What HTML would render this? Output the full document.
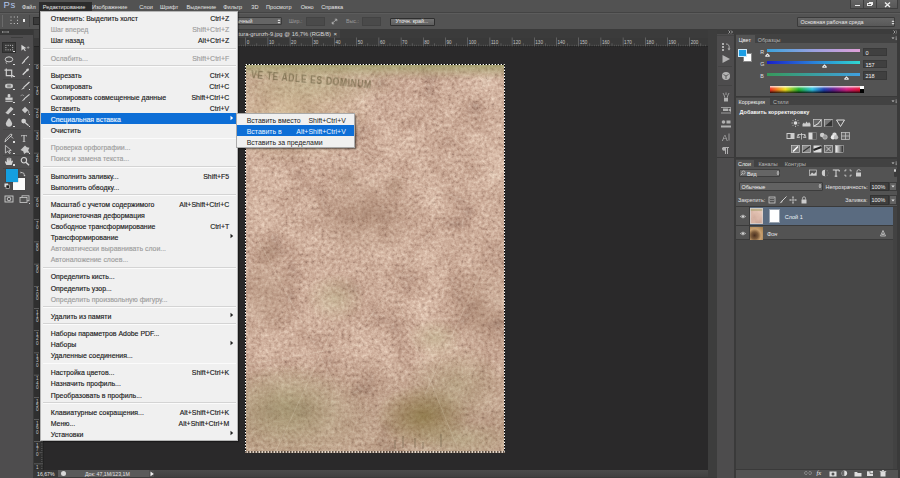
<!DOCTYPE html><html><head><meta charset="utf-8"><style>
*{margin:0;padding:0;box-sizing:border-box}
html,body{width:900px;height:478px;overflow:hidden;background:#535353;font-family:'Liberation Sans', sans-serif;position:relative}
.a{position:absolute}
.t{position:absolute;white-space:nowrap;line-height:1}
svg{position:absolute;overflow:visible}
</style></head><body>

<div class="a" style="left:34px;top:29px;width:674px;height:449px;background:#2a292a;"></div>
<div class="a" style="left:34px;top:29px;width:674px;height:8.5px;background:#3b3b3b;"></div>
<div class="a" style="left:34px;top:29px;width:306px;height:8.5px;background:#434343;"></div>
<div class="t" style="left:40px;top:32px;font-size:5.8px;color:#d8d8d8;left:auto;right:569px">Безымянный-1 @ tekstura-grunzh-9.jpg @ 16,7% (RGB/8)</div>
<div class="t" style="left:333.5px;top:31px;font-size:6px;color:#dddddd;">×</div>
<div class="a" style="left:34px;top:37.5px;width:674px;height:9px;background:#393939;"></div>
<div class="a" style="left:34px;top:46.3px;width:674px;height:0.7px;background:#232323;"></div>
<svg style="left:0px;top:0px;" width="900" height="478" viewBox="0 0 900 478"><rect x="45.60" y="37.5" width="0.6" height="9" fill="#7a7a7a"/><rect x="47.82" y="44.8" width="0.6" height="1.5" fill="#666"/><rect x="50.04" y="44.8" width="0.6" height="1.5" fill="#666"/><rect x="52.26" y="44.8" width="0.6" height="1.5" fill="#666"/><rect x="54.48" y="44.8" width="0.6" height="1.5" fill="#666"/><rect x="56.70" y="43.3" width="0.6" height="3" fill="#707070"/><rect x="58.92" y="44.8" width="0.6" height="1.5" fill="#666"/><rect x="61.14" y="44.8" width="0.6" height="1.5" fill="#666"/><rect x="63.36" y="44.8" width="0.6" height="1.5" fill="#666"/><rect x="65.58" y="44.8" width="0.6" height="1.5" fill="#666"/><rect x="67.80" y="37.5" width="0.6" height="9" fill="#7a7a7a"/><rect x="70.02" y="44.8" width="0.6" height="1.5" fill="#666"/><rect x="72.24" y="44.8" width="0.6" height="1.5" fill="#666"/><rect x="74.46" y="44.8" width="0.6" height="1.5" fill="#666"/><rect x="76.68" y="44.8" width="0.6" height="1.5" fill="#666"/><rect x="78.90" y="43.3" width="0.6" height="3" fill="#707070"/><rect x="81.12" y="44.8" width="0.6" height="1.5" fill="#666"/><rect x="83.34" y="44.8" width="0.6" height="1.5" fill="#666"/><rect x="85.56" y="44.8" width="0.6" height="1.5" fill="#666"/><rect x="87.78" y="44.8" width="0.6" height="1.5" fill="#666"/><rect x="90.00" y="37.5" width="0.6" height="9" fill="#7a7a7a"/><rect x="92.22" y="44.8" width="0.6" height="1.5" fill="#666"/><rect x="94.44" y="44.8" width="0.6" height="1.5" fill="#666"/><rect x="96.66" y="44.8" width="0.6" height="1.5" fill="#666"/><rect x="98.88" y="44.8" width="0.6" height="1.5" fill="#666"/><rect x="101.10" y="43.3" width="0.6" height="3" fill="#707070"/><rect x="103.32" y="44.8" width="0.6" height="1.5" fill="#666"/><rect x="105.54" y="44.8" width="0.6" height="1.5" fill="#666"/><rect x="107.76" y="44.8" width="0.6" height="1.5" fill="#666"/><rect x="109.98" y="44.8" width="0.6" height="1.5" fill="#666"/><rect x="112.20" y="37.5" width="0.6" height="9" fill="#7a7a7a"/><rect x="114.42" y="44.8" width="0.6" height="1.5" fill="#666"/><rect x="116.64" y="44.8" width="0.6" height="1.5" fill="#666"/><rect x="118.86" y="44.8" width="0.6" height="1.5" fill="#666"/><rect x="121.08" y="44.8" width="0.6" height="1.5" fill="#666"/><rect x="123.30" y="43.3" width="0.6" height="3" fill="#707070"/><rect x="125.52" y="44.8" width="0.6" height="1.5" fill="#666"/><rect x="127.74" y="44.8" width="0.6" height="1.5" fill="#666"/><rect x="129.96" y="44.8" width="0.6" height="1.5" fill="#666"/><rect x="132.18" y="44.8" width="0.6" height="1.5" fill="#666"/><rect x="134.40" y="37.5" width="0.6" height="9" fill="#7a7a7a"/><rect x="136.62" y="44.8" width="0.6" height="1.5" fill="#666"/><rect x="138.84" y="44.8" width="0.6" height="1.5" fill="#666"/><rect x="141.06" y="44.8" width="0.6" height="1.5" fill="#666"/><rect x="143.28" y="44.8" width="0.6" height="1.5" fill="#666"/><rect x="145.50" y="43.3" width="0.6" height="3" fill="#707070"/><rect x="147.72" y="44.8" width="0.6" height="1.5" fill="#666"/><rect x="149.94" y="44.8" width="0.6" height="1.5" fill="#666"/><rect x="152.16" y="44.8" width="0.6" height="1.5" fill="#666"/><rect x="154.38" y="44.8" width="0.6" height="1.5" fill="#666"/><rect x="156.60" y="37.5" width="0.6" height="9" fill="#7a7a7a"/><rect x="158.82" y="44.8" width="0.6" height="1.5" fill="#666"/><rect x="161.04" y="44.8" width="0.6" height="1.5" fill="#666"/><rect x="163.26" y="44.8" width="0.6" height="1.5" fill="#666"/><rect x="165.48" y="44.8" width="0.6" height="1.5" fill="#666"/><rect x="167.70" y="43.3" width="0.6" height="3" fill="#707070"/><rect x="169.92" y="44.8" width="0.6" height="1.5" fill="#666"/><rect x="172.14" y="44.8" width="0.6" height="1.5" fill="#666"/><rect x="174.36" y="44.8" width="0.6" height="1.5" fill="#666"/><rect x="176.58" y="44.8" width="0.6" height="1.5" fill="#666"/><rect x="178.80" y="37.5" width="0.6" height="9" fill="#7a7a7a"/><rect x="181.02" y="44.8" width="0.6" height="1.5" fill="#666"/><rect x="183.24" y="44.8" width="0.6" height="1.5" fill="#666"/><rect x="185.46" y="44.8" width="0.6" height="1.5" fill="#666"/><rect x="187.68" y="44.8" width="0.6" height="1.5" fill="#666"/><rect x="189.90" y="43.3" width="0.6" height="3" fill="#707070"/><rect x="192.12" y="44.8" width="0.6" height="1.5" fill="#666"/><rect x="194.34" y="44.8" width="0.6" height="1.5" fill="#666"/><rect x="196.56" y="44.8" width="0.6" height="1.5" fill="#666"/><rect x="198.78" y="44.8" width="0.6" height="1.5" fill="#666"/><rect x="201.00" y="37.5" width="0.6" height="9" fill="#7a7a7a"/><rect x="203.22" y="44.8" width="0.6" height="1.5" fill="#666"/><rect x="205.44" y="44.8" width="0.6" height="1.5" fill="#666"/><rect x="207.66" y="44.8" width="0.6" height="1.5" fill="#666"/><rect x="209.88" y="44.8" width="0.6" height="1.5" fill="#666"/><rect x="212.10" y="43.3" width="0.6" height="3" fill="#707070"/><rect x="214.32" y="44.8" width="0.6" height="1.5" fill="#666"/><rect x="216.54" y="44.8" width="0.6" height="1.5" fill="#666"/><rect x="218.76" y="44.8" width="0.6" height="1.5" fill="#666"/><rect x="220.98" y="44.8" width="0.6" height="1.5" fill="#666"/><rect x="223.20" y="37.5" width="0.6" height="9" fill="#7a7a7a"/><rect x="225.42" y="44.8" width="0.6" height="1.5" fill="#666"/><rect x="227.64" y="44.8" width="0.6" height="1.5" fill="#666"/><rect x="229.86" y="44.8" width="0.6" height="1.5" fill="#666"/><rect x="232.08" y="44.8" width="0.6" height="1.5" fill="#666"/><rect x="234.30" y="43.3" width="0.6" height="3" fill="#707070"/><rect x="236.52" y="44.8" width="0.6" height="1.5" fill="#666"/><rect x="238.74" y="44.8" width="0.6" height="1.5" fill="#666"/><rect x="240.96" y="44.8" width="0.6" height="1.5" fill="#666"/><rect x="243.18" y="44.8" width="0.6" height="1.5" fill="#666"/><rect x="245.40" y="37.5" width="0.6" height="9" fill="#7a7a7a"/><rect x="247.62" y="44.8" width="0.6" height="1.5" fill="#666"/><rect x="249.84" y="44.8" width="0.6" height="1.5" fill="#666"/><rect x="252.06" y="44.8" width="0.6" height="1.5" fill="#666"/><rect x="254.28" y="44.8" width="0.6" height="1.5" fill="#666"/><rect x="256.50" y="43.3" width="0.6" height="3" fill="#707070"/><rect x="258.72" y="44.8" width="0.6" height="1.5" fill="#666"/><rect x="260.94" y="44.8" width="0.6" height="1.5" fill="#666"/><rect x="263.16" y="44.8" width="0.6" height="1.5" fill="#666"/><rect x="265.38" y="44.8" width="0.6" height="1.5" fill="#666"/><rect x="267.60" y="37.5" width="0.6" height="9" fill="#7a7a7a"/><rect x="269.82" y="44.8" width="0.6" height="1.5" fill="#666"/><rect x="272.04" y="44.8" width="0.6" height="1.5" fill="#666"/><rect x="274.26" y="44.8" width="0.6" height="1.5" fill="#666"/><rect x="276.48" y="44.8" width="0.6" height="1.5" fill="#666"/><rect x="278.70" y="43.3" width="0.6" height="3" fill="#707070"/><rect x="280.92" y="44.8" width="0.6" height="1.5" fill="#666"/><rect x="283.14" y="44.8" width="0.6" height="1.5" fill="#666"/><rect x="285.36" y="44.8" width="0.6" height="1.5" fill="#666"/><rect x="287.58" y="44.8" width="0.6" height="1.5" fill="#666"/><rect x="289.80" y="37.5" width="0.6" height="9" fill="#7a7a7a"/><rect x="292.02" y="44.8" width="0.6" height="1.5" fill="#666"/><rect x="294.24" y="44.8" width="0.6" height="1.5" fill="#666"/><rect x="296.46" y="44.8" width="0.6" height="1.5" fill="#666"/><rect x="298.68" y="44.8" width="0.6" height="1.5" fill="#666"/><rect x="300.90" y="43.3" width="0.6" height="3" fill="#707070"/><rect x="303.12" y="44.8" width="0.6" height="1.5" fill="#666"/><rect x="305.34" y="44.8" width="0.6" height="1.5" fill="#666"/><rect x="307.56" y="44.8" width="0.6" height="1.5" fill="#666"/><rect x="309.78" y="44.8" width="0.6" height="1.5" fill="#666"/><rect x="312.00" y="37.5" width="0.6" height="9" fill="#7a7a7a"/><rect x="314.22" y="44.8" width="0.6" height="1.5" fill="#666"/><rect x="316.44" y="44.8" width="0.6" height="1.5" fill="#666"/><rect x="318.66" y="44.8" width="0.6" height="1.5" fill="#666"/><rect x="320.88" y="44.8" width="0.6" height="1.5" fill="#666"/><rect x="323.10" y="43.3" width="0.6" height="3" fill="#707070"/><rect x="325.32" y="44.8" width="0.6" height="1.5" fill="#666"/><rect x="327.54" y="44.8" width="0.6" height="1.5" fill="#666"/><rect x="329.76" y="44.8" width="0.6" height="1.5" fill="#666"/><rect x="331.98" y="44.8" width="0.6" height="1.5" fill="#666"/><rect x="334.20" y="37.5" width="0.6" height="9" fill="#7a7a7a"/><rect x="336.42" y="44.8" width="0.6" height="1.5" fill="#666"/><rect x="338.64" y="44.8" width="0.6" height="1.5" fill="#666"/><rect x="340.86" y="44.8" width="0.6" height="1.5" fill="#666"/><rect x="343.08" y="44.8" width="0.6" height="1.5" fill="#666"/><rect x="345.30" y="43.3" width="0.6" height="3" fill="#707070"/><rect x="347.52" y="44.8" width="0.6" height="1.5" fill="#666"/><rect x="349.74" y="44.8" width="0.6" height="1.5" fill="#666"/><rect x="351.96" y="44.8" width="0.6" height="1.5" fill="#666"/><rect x="354.18" y="44.8" width="0.6" height="1.5" fill="#666"/><rect x="356.40" y="37.5" width="0.6" height="9" fill="#7a7a7a"/><rect x="358.62" y="44.8" width="0.6" height="1.5" fill="#666"/><rect x="360.84" y="44.8" width="0.6" height="1.5" fill="#666"/><rect x="363.06" y="44.8" width="0.6" height="1.5" fill="#666"/><rect x="365.28" y="44.8" width="0.6" height="1.5" fill="#666"/><rect x="367.50" y="43.3" width="0.6" height="3" fill="#707070"/><rect x="369.72" y="44.8" width="0.6" height="1.5" fill="#666"/><rect x="371.94" y="44.8" width="0.6" height="1.5" fill="#666"/><rect x="374.16" y="44.8" width="0.6" height="1.5" fill="#666"/><rect x="376.38" y="44.8" width="0.6" height="1.5" fill="#666"/><rect x="378.60" y="37.5" width="0.6" height="9" fill="#7a7a7a"/><rect x="380.82" y="44.8" width="0.6" height="1.5" fill="#666"/><rect x="383.04" y="44.8" width="0.6" height="1.5" fill="#666"/><rect x="385.26" y="44.8" width="0.6" height="1.5" fill="#666"/><rect x="387.48" y="44.8" width="0.6" height="1.5" fill="#666"/><rect x="389.70" y="43.3" width="0.6" height="3" fill="#707070"/><rect x="391.92" y="44.8" width="0.6" height="1.5" fill="#666"/><rect x="394.14" y="44.8" width="0.6" height="1.5" fill="#666"/><rect x="396.36" y="44.8" width="0.6" height="1.5" fill="#666"/><rect x="398.58" y="44.8" width="0.6" height="1.5" fill="#666"/><rect x="400.80" y="37.5" width="0.6" height="9" fill="#7a7a7a"/><rect x="403.02" y="44.8" width="0.6" height="1.5" fill="#666"/><rect x="405.24" y="44.8" width="0.6" height="1.5" fill="#666"/><rect x="407.46" y="44.8" width="0.6" height="1.5" fill="#666"/><rect x="409.68" y="44.8" width="0.6" height="1.5" fill="#666"/><rect x="411.90" y="43.3" width="0.6" height="3" fill="#707070"/><rect x="414.12" y="44.8" width="0.6" height="1.5" fill="#666"/><rect x="416.34" y="44.8" width="0.6" height="1.5" fill="#666"/><rect x="418.56" y="44.8" width="0.6" height="1.5" fill="#666"/><rect x="420.78" y="44.8" width="0.6" height="1.5" fill="#666"/><rect x="423.00" y="37.5" width="0.6" height="9" fill="#7a7a7a"/><rect x="425.22" y="44.8" width="0.6" height="1.5" fill="#666"/><rect x="427.44" y="44.8" width="0.6" height="1.5" fill="#666"/><rect x="429.66" y="44.8" width="0.6" height="1.5" fill="#666"/><rect x="431.88" y="44.8" width="0.6" height="1.5" fill="#666"/><rect x="434.10" y="43.3" width="0.6" height="3" fill="#707070"/><rect x="436.32" y="44.8" width="0.6" height="1.5" fill="#666"/><rect x="438.54" y="44.8" width="0.6" height="1.5" fill="#666"/><rect x="440.76" y="44.8" width="0.6" height="1.5" fill="#666"/><rect x="442.98" y="44.8" width="0.6" height="1.5" fill="#666"/><rect x="445.20" y="37.5" width="0.6" height="9" fill="#7a7a7a"/><rect x="447.42" y="44.8" width="0.6" height="1.5" fill="#666"/><rect x="449.64" y="44.8" width="0.6" height="1.5" fill="#666"/><rect x="451.86" y="44.8" width="0.6" height="1.5" fill="#666"/><rect x="454.08" y="44.8" width="0.6" height="1.5" fill="#666"/><rect x="456.30" y="43.3" width="0.6" height="3" fill="#707070"/><rect x="458.52" y="44.8" width="0.6" height="1.5" fill="#666"/><rect x="460.74" y="44.8" width="0.6" height="1.5" fill="#666"/><rect x="462.96" y="44.8" width="0.6" height="1.5" fill="#666"/><rect x="465.18" y="44.8" width="0.6" height="1.5" fill="#666"/><rect x="467.40" y="37.5" width="0.6" height="9" fill="#7a7a7a"/><rect x="469.62" y="44.8" width="0.6" height="1.5" fill="#666"/><rect x="471.84" y="44.8" width="0.6" height="1.5" fill="#666"/><rect x="474.06" y="44.8" width="0.6" height="1.5" fill="#666"/><rect x="476.28" y="44.8" width="0.6" height="1.5" fill="#666"/><rect x="478.50" y="43.3" width="0.6" height="3" fill="#707070"/><rect x="480.72" y="44.8" width="0.6" height="1.5" fill="#666"/><rect x="482.94" y="44.8" width="0.6" height="1.5" fill="#666"/><rect x="485.16" y="44.8" width="0.6" height="1.5" fill="#666"/><rect x="487.38" y="44.8" width="0.6" height="1.5" fill="#666"/><rect x="489.60" y="37.5" width="0.6" height="9" fill="#7a7a7a"/><rect x="491.82" y="44.8" width="0.6" height="1.5" fill="#666"/><rect x="494.04" y="44.8" width="0.6" height="1.5" fill="#666"/><rect x="496.26" y="44.8" width="0.6" height="1.5" fill="#666"/><rect x="498.48" y="44.8" width="0.6" height="1.5" fill="#666"/><rect x="500.70" y="43.3" width="0.6" height="3" fill="#707070"/><rect x="502.92" y="44.8" width="0.6" height="1.5" fill="#666"/><rect x="505.14" y="44.8" width="0.6" height="1.5" fill="#666"/><rect x="507.36" y="44.8" width="0.6" height="1.5" fill="#666"/><rect x="509.58" y="44.8" width="0.6" height="1.5" fill="#666"/><rect x="511.80" y="37.5" width="0.6" height="9" fill="#7a7a7a"/><rect x="514.02" y="44.8" width="0.6" height="1.5" fill="#666"/><rect x="516.24" y="44.8" width="0.6" height="1.5" fill="#666"/><rect x="518.46" y="44.8" width="0.6" height="1.5" fill="#666"/><rect x="520.68" y="44.8" width="0.6" height="1.5" fill="#666"/><rect x="522.90" y="43.3" width="0.6" height="3" fill="#707070"/><rect x="525.12" y="44.8" width="0.6" height="1.5" fill="#666"/><rect x="527.34" y="44.8" width="0.6" height="1.5" fill="#666"/><rect x="529.56" y="44.8" width="0.6" height="1.5" fill="#666"/><rect x="531.78" y="44.8" width="0.6" height="1.5" fill="#666"/><rect x="534.00" y="37.5" width="0.6" height="9" fill="#7a7a7a"/><rect x="536.22" y="44.8" width="0.6" height="1.5" fill="#666"/><rect x="538.44" y="44.8" width="0.6" height="1.5" fill="#666"/><rect x="540.66" y="44.8" width="0.6" height="1.5" fill="#666"/><rect x="542.88" y="44.8" width="0.6" height="1.5" fill="#666"/><rect x="545.10" y="43.3" width="0.6" height="3" fill="#707070"/><rect x="547.32" y="44.8" width="0.6" height="1.5" fill="#666"/><rect x="549.54" y="44.8" width="0.6" height="1.5" fill="#666"/><rect x="551.76" y="44.8" width="0.6" height="1.5" fill="#666"/><rect x="553.98" y="44.8" width="0.6" height="1.5" fill="#666"/><rect x="556.20" y="37.5" width="0.6" height="9" fill="#7a7a7a"/><rect x="558.42" y="44.8" width="0.6" height="1.5" fill="#666"/><rect x="560.64" y="44.8" width="0.6" height="1.5" fill="#666"/><rect x="562.86" y="44.8" width="0.6" height="1.5" fill="#666"/><rect x="565.08" y="44.8" width="0.6" height="1.5" fill="#666"/><rect x="567.30" y="43.3" width="0.6" height="3" fill="#707070"/><rect x="569.52" y="44.8" width="0.6" height="1.5" fill="#666"/><rect x="571.74" y="44.8" width="0.6" height="1.5" fill="#666"/><rect x="573.96" y="44.8" width="0.6" height="1.5" fill="#666"/><rect x="576.18" y="44.8" width="0.6" height="1.5" fill="#666"/><rect x="578.40" y="37.5" width="0.6" height="9" fill="#7a7a7a"/><rect x="580.62" y="44.8" width="0.6" height="1.5" fill="#666"/><rect x="582.84" y="44.8" width="0.6" height="1.5" fill="#666"/><rect x="585.06" y="44.8" width="0.6" height="1.5" fill="#666"/><rect x="587.28" y="44.8" width="0.6" height="1.5" fill="#666"/><rect x="589.50" y="43.3" width="0.6" height="3" fill="#707070"/><rect x="591.72" y="44.8" width="0.6" height="1.5" fill="#666"/><rect x="593.94" y="44.8" width="0.6" height="1.5" fill="#666"/><rect x="596.16" y="44.8" width="0.6" height="1.5" fill="#666"/><rect x="598.38" y="44.8" width="0.6" height="1.5" fill="#666"/><rect x="600.60" y="37.5" width="0.6" height="9" fill="#7a7a7a"/><rect x="602.82" y="44.8" width="0.6" height="1.5" fill="#666"/><rect x="605.04" y="44.8" width="0.6" height="1.5" fill="#666"/><rect x="607.26" y="44.8" width="0.6" height="1.5" fill="#666"/><rect x="609.48" y="44.8" width="0.6" height="1.5" fill="#666"/><rect x="611.70" y="43.3" width="0.6" height="3" fill="#707070"/><rect x="613.92" y="44.8" width="0.6" height="1.5" fill="#666"/><rect x="616.14" y="44.8" width="0.6" height="1.5" fill="#666"/><rect x="618.36" y="44.8" width="0.6" height="1.5" fill="#666"/><rect x="620.58" y="44.8" width="0.6" height="1.5" fill="#666"/><rect x="622.80" y="37.5" width="0.6" height="9" fill="#7a7a7a"/><rect x="625.02" y="44.8" width="0.6" height="1.5" fill="#666"/><rect x="627.24" y="44.8" width="0.6" height="1.5" fill="#666"/><rect x="629.46" y="44.8" width="0.6" height="1.5" fill="#666"/><rect x="631.68" y="44.8" width="0.6" height="1.5" fill="#666"/><rect x="633.90" y="43.3" width="0.6" height="3" fill="#707070"/><rect x="636.12" y="44.8" width="0.6" height="1.5" fill="#666"/><rect x="638.34" y="44.8" width="0.6" height="1.5" fill="#666"/><rect x="640.56" y="44.8" width="0.6" height="1.5" fill="#666"/><rect x="642.78" y="44.8" width="0.6" height="1.5" fill="#666"/><rect x="645.00" y="37.5" width="0.6" height="9" fill="#7a7a7a"/><rect x="647.22" y="44.8" width="0.6" height="1.5" fill="#666"/><rect x="649.44" y="44.8" width="0.6" height="1.5" fill="#666"/><rect x="651.66" y="44.8" width="0.6" height="1.5" fill="#666"/><rect x="653.88" y="44.8" width="0.6" height="1.5" fill="#666"/><rect x="656.10" y="43.3" width="0.6" height="3" fill="#707070"/><rect x="658.32" y="44.8" width="0.6" height="1.5" fill="#666"/><rect x="660.54" y="44.8" width="0.6" height="1.5" fill="#666"/><rect x="662.76" y="44.8" width="0.6" height="1.5" fill="#666"/><rect x="664.98" y="44.8" width="0.6" height="1.5" fill="#666"/><rect x="667.20" y="37.5" width="0.6" height="9" fill="#7a7a7a"/><rect x="669.42" y="44.8" width="0.6" height="1.5" fill="#666"/><rect x="671.64" y="44.8" width="0.6" height="1.5" fill="#666"/><rect x="673.86" y="44.8" width="0.6" height="1.5" fill="#666"/><rect x="676.08" y="44.8" width="0.6" height="1.5" fill="#666"/><rect x="678.30" y="43.3" width="0.6" height="3" fill="#707070"/><rect x="680.52" y="44.8" width="0.6" height="1.5" fill="#666"/><rect x="682.74" y="44.8" width="0.6" height="1.5" fill="#666"/><rect x="684.96" y="44.8" width="0.6" height="1.5" fill="#666"/><rect x="687.18" y="44.8" width="0.6" height="1.5" fill="#666"/><rect x="689.40" y="37.5" width="0.6" height="9" fill="#7a7a7a"/><rect x="691.62" y="44.8" width="0.6" height="1.5" fill="#666"/><rect x="693.84" y="44.8" width="0.6" height="1.5" fill="#666"/><rect x="696.06" y="44.8" width="0.6" height="1.5" fill="#666"/><rect x="698.28" y="44.8" width="0.6" height="1.5" fill="#666"/><rect x="700.50" y="43.3" width="0.6" height="3" fill="#707070"/><rect x="702.72" y="44.8" width="0.6" height="1.5" fill="#666"/><rect x="704.94" y="44.8" width="0.6" height="1.5" fill="#666"/></svg>
<div class="t" style="left:46.90000000000002px;top:41px;font-size:4.6px;color:#c4c4c4;">90</div>
<div class="t" style="left:69.10000000000001px;top:41px;font-size:4.6px;color:#c4c4c4;">80</div>
<div class="t" style="left:91.3px;top:41px;font-size:4.6px;color:#c4c4c4;">70</div>
<div class="t" style="left:113.50000000000001px;top:41px;font-size:4.6px;color:#c4c4c4;">60</div>
<div class="t" style="left:135.70000000000002px;top:41px;font-size:4.6px;color:#c4c4c4;">50</div>
<div class="t" style="left:157.90000000000003px;top:41px;font-size:4.6px;color:#c4c4c4;">40</div>
<div class="t" style="left:180.10000000000002px;top:41px;font-size:4.6px;color:#c4c4c4;">30</div>
<div class="t" style="left:202.3px;top:41px;font-size:4.6px;color:#c4c4c4;">20</div>
<div class="t" style="left:224.50000000000003px;top:41px;font-size:4.6px;color:#c4c4c4;">10</div>
<div class="t" style="left:246.70000000000002px;top:41px;font-size:4.6px;color:#c4c4c4;">0</div>
<div class="t" style="left:268.90000000000003px;top:41px;font-size:4.6px;color:#c4c4c4;">10</div>
<div class="t" style="left:291.1px;top:41px;font-size:4.6px;color:#c4c4c4;">20</div>
<div class="t" style="left:313.3px;top:41px;font-size:4.6px;color:#c4c4c4;">30</div>
<div class="t" style="left:335.5px;top:41px;font-size:4.6px;color:#c4c4c4;">40</div>
<div class="t" style="left:357.7px;top:41px;font-size:4.6px;color:#c4c4c4;">50</div>
<div class="t" style="left:379.90000000000003px;top:41px;font-size:4.6px;color:#c4c4c4;">60</div>
<div class="t" style="left:402.1px;top:41px;font-size:4.6px;color:#c4c4c4;">70</div>
<div class="t" style="left:424.3px;top:41px;font-size:4.6px;color:#c4c4c4;">80</div>
<div class="t" style="left:446.5px;top:41px;font-size:4.6px;color:#c4c4c4;">90</div>
<div class="t" style="left:468.7px;top:41px;font-size:4.6px;color:#c4c4c4;">100</div>
<div class="t" style="left:490.90000000000003px;top:41px;font-size:4.6px;color:#c4c4c4;">110</div>
<div class="t" style="left:513.0999999999999px;top:41px;font-size:4.6px;color:#c4c4c4;">120</div>
<div class="t" style="left:535.3px;top:41px;font-size:4.6px;color:#c4c4c4;">130</div>
<div class="t" style="left:557.5px;top:41px;font-size:4.6px;color:#c4c4c4;">140</div>
<div class="t" style="left:579.6999999999999px;top:41px;font-size:4.6px;color:#c4c4c4;">150</div>
<div class="t" style="left:601.9px;top:41px;font-size:4.6px;color:#c4c4c4;">160</div>
<div class="t" style="left:624.0999999999999px;top:41px;font-size:4.6px;color:#c4c4c4;">170</div>
<div class="t" style="left:646.3px;top:41px;font-size:4.6px;color:#c4c4c4;">180</div>
<div class="t" style="left:668.5px;top:41px;font-size:4.6px;color:#c4c4c4;">190</div>
<div class="t" style="left:690.6999999999999px;top:41px;font-size:4.6px;color:#c4c4c4;">200</div>
<div class="a" style="left:34px;top:46.5px;width:9px;height:424px;background:#2f2f2f;"></div>
<div class="a" style="left:42.5px;top:46.5px;width:0.7px;height:424px;background:#232323;"></div>
<svg style="left:0px;top:0px;" width="900" height="478" viewBox="0 0 900 478"><rect x="41" y="48.46" width="1.5" height="0.6" fill="#666"/><rect x="41" y="50.68" width="1.5" height="0.6" fill="#666"/><rect x="39.5" y="52.90" width="3" height="0.6" fill="#707070"/><rect x="41" y="55.12" width="1.5" height="0.6" fill="#666"/><rect x="41" y="57.34" width="1.5" height="0.6" fill="#666"/><rect x="41" y="59.56" width="1.5" height="0.6" fill="#666"/><rect x="41" y="61.78" width="1.5" height="0.6" fill="#666"/><rect x="34" y="64.00" width="9" height="0.6" fill="#7a7a7a"/><rect x="41" y="66.22" width="1.5" height="0.6" fill="#666"/><rect x="41" y="68.44" width="1.5" height="0.6" fill="#666"/><rect x="41" y="70.66" width="1.5" height="0.6" fill="#666"/><rect x="41" y="72.88" width="1.5" height="0.6" fill="#666"/><rect x="39.5" y="75.10" width="3" height="0.6" fill="#707070"/><rect x="41" y="77.32" width="1.5" height="0.6" fill="#666"/><rect x="41" y="79.54" width="1.5" height="0.6" fill="#666"/><rect x="41" y="81.76" width="1.5" height="0.6" fill="#666"/><rect x="41" y="83.98" width="1.5" height="0.6" fill="#666"/><rect x="34" y="86.20" width="9" height="0.6" fill="#7a7a7a"/><rect x="41" y="88.42" width="1.5" height="0.6" fill="#666"/><rect x="41" y="90.64" width="1.5" height="0.6" fill="#666"/><rect x="41" y="92.86" width="1.5" height="0.6" fill="#666"/><rect x="41" y="95.08" width="1.5" height="0.6" fill="#666"/><rect x="39.5" y="97.30" width="3" height="0.6" fill="#707070"/><rect x="41" y="99.52" width="1.5" height="0.6" fill="#666"/><rect x="41" y="101.74" width="1.5" height="0.6" fill="#666"/><rect x="41" y="103.96" width="1.5" height="0.6" fill="#666"/><rect x="41" y="106.18" width="1.5" height="0.6" fill="#666"/><rect x="34" y="108.40" width="9" height="0.6" fill="#7a7a7a"/><rect x="41" y="110.62" width="1.5" height="0.6" fill="#666"/><rect x="41" y="112.84" width="1.5" height="0.6" fill="#666"/><rect x="41" y="115.06" width="1.5" height="0.6" fill="#666"/><rect x="41" y="117.28" width="1.5" height="0.6" fill="#666"/><rect x="39.5" y="119.50" width="3" height="0.6" fill="#707070"/><rect x="41" y="121.72" width="1.5" height="0.6" fill="#666"/><rect x="41" y="123.94" width="1.5" height="0.6" fill="#666"/><rect x="41" y="126.16" width="1.5" height="0.6" fill="#666"/><rect x="41" y="128.38" width="1.5" height="0.6" fill="#666"/><rect x="34" y="130.60" width="9" height="0.6" fill="#7a7a7a"/><rect x="41" y="132.82" width="1.5" height="0.6" fill="#666"/><rect x="41" y="135.04" width="1.5" height="0.6" fill="#666"/><rect x="41" y="137.26" width="1.5" height="0.6" fill="#666"/><rect x="41" y="139.48" width="1.5" height="0.6" fill="#666"/><rect x="39.5" y="141.70" width="3" height="0.6" fill="#707070"/><rect x="41" y="143.92" width="1.5" height="0.6" fill="#666"/><rect x="41" y="146.14" width="1.5" height="0.6" fill="#666"/><rect x="41" y="148.36" width="1.5" height="0.6" fill="#666"/><rect x="41" y="150.58" width="1.5" height="0.6" fill="#666"/><rect x="34" y="152.80" width="9" height="0.6" fill="#7a7a7a"/><rect x="41" y="155.02" width="1.5" height="0.6" fill="#666"/><rect x="41" y="157.24" width="1.5" height="0.6" fill="#666"/><rect x="41" y="159.46" width="1.5" height="0.6" fill="#666"/><rect x="41" y="161.68" width="1.5" height="0.6" fill="#666"/><rect x="39.5" y="163.90" width="3" height="0.6" fill="#707070"/><rect x="41" y="166.12" width="1.5" height="0.6" fill="#666"/><rect x="41" y="168.34" width="1.5" height="0.6" fill="#666"/><rect x="41" y="170.56" width="1.5" height="0.6" fill="#666"/><rect x="41" y="172.78" width="1.5" height="0.6" fill="#666"/><rect x="34" y="175.00" width="9" height="0.6" fill="#7a7a7a"/><rect x="41" y="177.22" width="1.5" height="0.6" fill="#666"/><rect x="41" y="179.44" width="1.5" height="0.6" fill="#666"/><rect x="41" y="181.66" width="1.5" height="0.6" fill="#666"/><rect x="41" y="183.88" width="1.5" height="0.6" fill="#666"/><rect x="39.5" y="186.10" width="3" height="0.6" fill="#707070"/><rect x="41" y="188.32" width="1.5" height="0.6" fill="#666"/><rect x="41" y="190.54" width="1.5" height="0.6" fill="#666"/><rect x="41" y="192.76" width="1.5" height="0.6" fill="#666"/><rect x="41" y="194.98" width="1.5" height="0.6" fill="#666"/><rect x="34" y="197.20" width="9" height="0.6" fill="#7a7a7a"/><rect x="41" y="199.42" width="1.5" height="0.6" fill="#666"/><rect x="41" y="201.64" width="1.5" height="0.6" fill="#666"/><rect x="41" y="203.86" width="1.5" height="0.6" fill="#666"/><rect x="41" y="206.08" width="1.5" height="0.6" fill="#666"/><rect x="39.5" y="208.30" width="3" height="0.6" fill="#707070"/><rect x="41" y="210.52" width="1.5" height="0.6" fill="#666"/><rect x="41" y="212.74" width="1.5" height="0.6" fill="#666"/><rect x="41" y="214.96" width="1.5" height="0.6" fill="#666"/><rect x="41" y="217.18" width="1.5" height="0.6" fill="#666"/><rect x="34" y="219.40" width="9" height="0.6" fill="#7a7a7a"/><rect x="41" y="221.62" width="1.5" height="0.6" fill="#666"/><rect x="41" y="223.84" width="1.5" height="0.6" fill="#666"/><rect x="41" y="226.06" width="1.5" height="0.6" fill="#666"/><rect x="41" y="228.28" width="1.5" height="0.6" fill="#666"/><rect x="39.5" y="230.50" width="3" height="0.6" fill="#707070"/><rect x="41" y="232.72" width="1.5" height="0.6" fill="#666"/><rect x="41" y="234.94" width="1.5" height="0.6" fill="#666"/><rect x="41" y="237.16" width="1.5" height="0.6" fill="#666"/><rect x="41" y="239.38" width="1.5" height="0.6" fill="#666"/><rect x="34" y="241.60" width="9" height="0.6" fill="#7a7a7a"/><rect x="41" y="243.82" width="1.5" height="0.6" fill="#666"/><rect x="41" y="246.04" width="1.5" height="0.6" fill="#666"/><rect x="41" y="248.26" width="1.5" height="0.6" fill="#666"/><rect x="41" y="250.48" width="1.5" height="0.6" fill="#666"/><rect x="39.5" y="252.70" width="3" height="0.6" fill="#707070"/><rect x="41" y="254.92" width="1.5" height="0.6" fill="#666"/><rect x="41" y="257.14" width="1.5" height="0.6" fill="#666"/><rect x="41" y="259.36" width="1.5" height="0.6" fill="#666"/><rect x="41" y="261.58" width="1.5" height="0.6" fill="#666"/><rect x="34" y="263.80" width="9" height="0.6" fill="#7a7a7a"/><rect x="41" y="266.02" width="1.5" height="0.6" fill="#666"/><rect x="41" y="268.24" width="1.5" height="0.6" fill="#666"/><rect x="41" y="270.46" width="1.5" height="0.6" fill="#666"/><rect x="41" y="272.68" width="1.5" height="0.6" fill="#666"/><rect x="39.5" y="274.90" width="3" height="0.6" fill="#707070"/><rect x="41" y="277.12" width="1.5" height="0.6" fill="#666"/><rect x="41" y="279.34" width="1.5" height="0.6" fill="#666"/><rect x="41" y="281.56" width="1.5" height="0.6" fill="#666"/><rect x="41" y="283.78" width="1.5" height="0.6" fill="#666"/><rect x="34" y="286.00" width="9" height="0.6" fill="#7a7a7a"/><rect x="41" y="288.22" width="1.5" height="0.6" fill="#666"/><rect x="41" y="290.44" width="1.5" height="0.6" fill="#666"/><rect x="41" y="292.66" width="1.5" height="0.6" fill="#666"/><rect x="41" y="294.88" width="1.5" height="0.6" fill="#666"/><rect x="39.5" y="297.10" width="3" height="0.6" fill="#707070"/><rect x="41" y="299.32" width="1.5" height="0.6" fill="#666"/><rect x="41" y="301.54" width="1.5" height="0.6" fill="#666"/><rect x="41" y="303.76" width="1.5" height="0.6" fill="#666"/><rect x="41" y="305.98" width="1.5" height="0.6" fill="#666"/><rect x="34" y="308.20" width="9" height="0.6" fill="#7a7a7a"/><rect x="41" y="310.42" width="1.5" height="0.6" fill="#666"/><rect x="41" y="312.64" width="1.5" height="0.6" fill="#666"/><rect x="41" y="314.86" width="1.5" height="0.6" fill="#666"/><rect x="41" y="317.08" width="1.5" height="0.6" fill="#666"/><rect x="39.5" y="319.30" width="3" height="0.6" fill="#707070"/><rect x="41" y="321.52" width="1.5" height="0.6" fill="#666"/><rect x="41" y="323.74" width="1.5" height="0.6" fill="#666"/><rect x="41" y="325.96" width="1.5" height="0.6" fill="#666"/><rect x="41" y="328.18" width="1.5" height="0.6" fill="#666"/><rect x="34" y="330.40" width="9" height="0.6" fill="#7a7a7a"/><rect x="41" y="332.62" width="1.5" height="0.6" fill="#666"/><rect x="41" y="334.84" width="1.5" height="0.6" fill="#666"/><rect x="41" y="337.06" width="1.5" height="0.6" fill="#666"/><rect x="41" y="339.28" width="1.5" height="0.6" fill="#666"/><rect x="39.5" y="341.50" width="3" height="0.6" fill="#707070"/><rect x="41" y="343.72" width="1.5" height="0.6" fill="#666"/><rect x="41" y="345.94" width="1.5" height="0.6" fill="#666"/><rect x="41" y="348.16" width="1.5" height="0.6" fill="#666"/><rect x="41" y="350.38" width="1.5" height="0.6" fill="#666"/><rect x="34" y="352.60" width="9" height="0.6" fill="#7a7a7a"/><rect x="41" y="354.82" width="1.5" height="0.6" fill="#666"/><rect x="41" y="357.04" width="1.5" height="0.6" fill="#666"/><rect x="41" y="359.26" width="1.5" height="0.6" fill="#666"/><rect x="41" y="361.48" width="1.5" height="0.6" fill="#666"/><rect x="39.5" y="363.70" width="3" height="0.6" fill="#707070"/><rect x="41" y="365.92" width="1.5" height="0.6" fill="#666"/><rect x="41" y="368.14" width="1.5" height="0.6" fill="#666"/><rect x="41" y="370.36" width="1.5" height="0.6" fill="#666"/><rect x="41" y="372.58" width="1.5" height="0.6" fill="#666"/><rect x="34" y="374.80" width="9" height="0.6" fill="#7a7a7a"/><rect x="41" y="377.02" width="1.5" height="0.6" fill="#666"/><rect x="41" y="379.24" width="1.5" height="0.6" fill="#666"/><rect x="41" y="381.46" width="1.5" height="0.6" fill="#666"/><rect x="41" y="383.68" width="1.5" height="0.6" fill="#666"/><rect x="39.5" y="385.90" width="3" height="0.6" fill="#707070"/><rect x="41" y="388.12" width="1.5" height="0.6" fill="#666"/><rect x="41" y="390.34" width="1.5" height="0.6" fill="#666"/><rect x="41" y="392.56" width="1.5" height="0.6" fill="#666"/><rect x="41" y="394.78" width="1.5" height="0.6" fill="#666"/><rect x="34" y="397.00" width="9" height="0.6" fill="#7a7a7a"/><rect x="41" y="399.22" width="1.5" height="0.6" fill="#666"/><rect x="41" y="401.44" width="1.5" height="0.6" fill="#666"/><rect x="41" y="403.66" width="1.5" height="0.6" fill="#666"/><rect x="41" y="405.88" width="1.5" height="0.6" fill="#666"/><rect x="39.5" y="408.10" width="3" height="0.6" fill="#707070"/><rect x="41" y="410.32" width="1.5" height="0.6" fill="#666"/><rect x="41" y="412.54" width="1.5" height="0.6" fill="#666"/><rect x="41" y="414.76" width="1.5" height="0.6" fill="#666"/><rect x="41" y="416.98" width="1.5" height="0.6" fill="#666"/><rect x="34" y="419.20" width="9" height="0.6" fill="#7a7a7a"/><rect x="41" y="421.42" width="1.5" height="0.6" fill="#666"/><rect x="41" y="423.64" width="1.5" height="0.6" fill="#666"/><rect x="41" y="425.86" width="1.5" height="0.6" fill="#666"/><rect x="41" y="428.08" width="1.5" height="0.6" fill="#666"/><rect x="39.5" y="430.30" width="3" height="0.6" fill="#707070"/><rect x="41" y="432.52" width="1.5" height="0.6" fill="#666"/><rect x="41" y="434.74" width="1.5" height="0.6" fill="#666"/><rect x="41" y="436.96" width="1.5" height="0.6" fill="#666"/><rect x="41" y="439.18" width="1.5" height="0.6" fill="#666"/><rect x="34" y="441.40" width="9" height="0.6" fill="#7a7a7a"/><rect x="41" y="443.62" width="1.5" height="0.6" fill="#666"/><rect x="41" y="445.84" width="1.5" height="0.6" fill="#666"/><rect x="41" y="448.06" width="1.5" height="0.6" fill="#666"/><rect x="41" y="450.28" width="1.5" height="0.6" fill="#666"/><rect x="39.5" y="452.50" width="3" height="0.6" fill="#707070"/><rect x="41" y="454.72" width="1.5" height="0.6" fill="#666"/><rect x="41" y="456.94" width="1.5" height="0.6" fill="#666"/><rect x="41" y="459.16" width="1.5" height="0.6" fill="#666"/><rect x="41" y="461.38" width="1.5" height="0.6" fill="#666"/><rect x="34" y="463.60" width="9" height="0.6" fill="#7a7a7a"/><rect x="41" y="465.82" width="1.5" height="0.6" fill="#666"/><rect x="41" y="468.04" width="1.5" height="0.6" fill="#666"/></svg>
<div class="t" style="left:35.2px;top:65.80px;font-size:4.6px;line-height:4.4px;color:#c4c4c4;width:4px;text-align:center;white-space:normal;word-break:break-all">0</div>
<div class="t" style="left:35.2px;top:88.05px;font-size:4.6px;line-height:4.4px;color:#c4c4c4;width:4px;text-align:center;white-space:normal;word-break:break-all">1<br>0</div>
<div class="t" style="left:35.2px;top:110.30px;font-size:4.6px;line-height:4.4px;color:#c4c4c4;width:4px;text-align:center;white-space:normal;word-break:break-all">2<br>0</div>
<div class="t" style="left:35.2px;top:132.55px;font-size:4.6px;line-height:4.4px;color:#c4c4c4;width:4px;text-align:center;white-space:normal;word-break:break-all">3<br>0</div>
<div class="t" style="left:35.2px;top:154.80px;font-size:4.6px;line-height:4.4px;color:#c4c4c4;width:4px;text-align:center;white-space:normal;word-break:break-all">4<br>0</div>
<div class="t" style="left:35.2px;top:177.05px;font-size:4.6px;line-height:4.4px;color:#c4c4c4;width:4px;text-align:center;white-space:normal;word-break:break-all">5<br>0</div>
<div class="t" style="left:35.2px;top:199.30px;font-size:4.6px;line-height:4.4px;color:#c4c4c4;width:4px;text-align:center;white-space:normal;word-break:break-all">6<br>0</div>
<div class="t" style="left:35.2px;top:221.55px;font-size:4.6px;line-height:4.4px;color:#c4c4c4;width:4px;text-align:center;white-space:normal;word-break:break-all">7<br>0</div>
<div class="t" style="left:35.2px;top:243.80px;font-size:4.6px;line-height:4.4px;color:#c4c4c4;width:4px;text-align:center;white-space:normal;word-break:break-all">8<br>0</div>
<div class="t" style="left:35.2px;top:266.05px;font-size:4.6px;line-height:4.4px;color:#c4c4c4;width:4px;text-align:center;white-space:normal;word-break:break-all">9<br>0</div>
<div class="t" style="left:35.2px;top:288.30px;font-size:4.6px;line-height:4.4px;color:#c4c4c4;width:4px;text-align:center;white-space:normal;word-break:break-all">1<br>0<br>0</div>
<div class="t" style="left:35.2px;top:310.55px;font-size:4.6px;line-height:4.4px;color:#c4c4c4;width:4px;text-align:center;white-space:normal;word-break:break-all">1<br>1<br>0</div>
<div class="t" style="left:35.2px;top:332.80px;font-size:4.6px;line-height:4.4px;color:#c4c4c4;width:4px;text-align:center;white-space:normal;word-break:break-all">1<br>2<br>0</div>
<div class="t" style="left:35.2px;top:355.05px;font-size:4.6px;line-height:4.4px;color:#c4c4c4;width:4px;text-align:center;white-space:normal;word-break:break-all">1<br>3<br>0</div>
<div class="t" style="left:35.2px;top:377.30px;font-size:4.6px;line-height:4.4px;color:#c4c4c4;width:4px;text-align:center;white-space:normal;word-break:break-all">1<br>4<br>0</div>
<div class="t" style="left:35.2px;top:399.55px;font-size:4.6px;line-height:4.4px;color:#c4c4c4;width:4px;text-align:center;white-space:normal;word-break:break-all">1<br>5<br>0</div>
<div class="t" style="left:35.2px;top:421.80px;font-size:4.6px;line-height:4.4px;color:#c4c4c4;width:4px;text-align:center;white-space:normal;word-break:break-all">1<br>6<br>0</div>
<div class="t" style="left:35.2px;top:444.05px;font-size:4.6px;line-height:4.4px;color:#c4c4c4;width:4px;text-align:center;white-space:normal;word-break:break-all">1<br>7<br>0</div>
<div class="t" style="left:35.2px;top:466.30px;font-size:4.6px;line-height:4.4px;color:#c4c4c4;width:4px;text-align:center;white-space:normal;word-break:break-all">1<br>8<br>0</div>
<div class="a" style="left:708px;top:29px;width:8.5px;height:449px;background:#3d3d3d;"></div>
<svg style="left:245px;top:64px;overflow:hidden" width="260" height="389" viewBox="0 0 260 389">
<defs><filter id="tex" x="0" y="0" width="100%" height="100%" color-interpolation-filters="sRGB"><feTurbulence type="fractalNoise" baseFrequency="0.03" numOctaves="6" seed="7"/><feColorMatrix type="matrix" values="1 0 0 0 0  1 0 0 0 0  1 0 0 0 0  0 0 0 0 1"/><feComponentTransfer><feFuncR type="table" tableValues="0.50 0.59 0.69 0.78 0.83 0.88 0.93 0.96 0.99"/><feFuncG type="table" tableValues="0.37 0.45 0.54 0.63 0.69 0.75 0.81 0.88 0.94"/><feFuncB type="table" tableValues="0.34 0.41 0.49 0.57 0.63 0.69 0.75 0.82 0.89"/></feComponentTransfer></filter><filter id="grain" x="0" y="0" width="100%" height="100%" color-interpolation-filters="sRGB"><feTurbulence type="fractalNoise" baseFrequency="0.3" numOctaves="3" seed="5"/><feColorMatrix type="matrix" values="1 0 0 0 0  1 0 0 0 0  1 0 0 0 0  0 0 0 0 1"/><feComponentTransfer><feFuncR type="table" tableValues="0.35 0.45 0.6 0.72 0.78 0.84 0.9 0.96 1"/><feFuncG type="table" tableValues="0.25 0.34 0.48 0.6 0.67 0.75 0.83 0.9 0.95"/><feFuncB type="table" tableValues="0.2 0.28 0.4 0.51 0.58 0.66 0.74 0.82 0.88"/></feComponentTransfer><feGaussianBlur stdDeviation="0.3"/></filter>
<radialGradient id="g1" cx="0.5" cy="0.5" r="0.5"><stop offset="0" stop-color="#7a6a28" stop-opacity="0.6"/><stop offset="1" stop-color="#7a6a28" stop-opacity="0"/></radialGradient>
<radialGradient id="g2" cx="0.5" cy="0.5" r="0.5"><stop offset="0" stop-color="#a4a874" stop-opacity="0.3"/><stop offset="1" stop-color="#a4a874" stop-opacity="0"/></radialGradient>
<radialGradient id="g3" cx="0.5" cy="0.5" r="0.5"><stop offset="0" stop-color="#8c6a52" stop-opacity="0.3"/><stop offset="1" stop-color="#8c6a52" stop-opacity="0"/></radialGradient>
<linearGradient id="top" x1="0" y1="0" x2="0" y2="1"><stop offset="0" stop-color="#8e9a58" stop-opacity="0.85"/><stop offset="1" stop-color="#a8a070" stop-opacity="0"/></linearGradient>
<radialGradient id="khaki" cx="0.5" cy="0.5" r="0.5"><stop offset="0" stop-color="#c8b888" stop-opacity="0.45"/><stop offset="1" stop-color="#c8b888" stop-opacity="0"/></radialGradient><linearGradient id="bot" x1="0" y1="0" x2="0" y2="1"><stop offset="0" stop-color="#6e5a38" stop-opacity="0"/><stop offset="0.6" stop-color="#6e5a38" stop-opacity="0.18"/><stop offset="1" stop-color="#6e6a38" stop-opacity="0.12"/></linearGradient><filter id="tb"><feGaussianBlur stdDeviation="0.45"/></filter>
</defs>
<rect width="260" height="389" filter="url(#tex)"/>
<rect width="260" height="389" filter="url(#grain)" opacity="0.5"/>
<rect width="260" height="16" fill="url(#top)" opacity="0.8"/><ellipse cx="45" cy="45" rx="85" ry="55" fill="url(#khaki)"/>
<ellipse cx="70" cy="20" rx="90" ry="22" fill="url(#g2)"/>
<ellipse cx="178" cy="352" rx="48" ry="32" fill="url(#g1)"/><ellipse cx="90" cy="234" rx="30" ry="25" fill="url(#g2)"/><ellipse cx="190" cy="274" rx="28" ry="20" fill="url(#g2)"/>
<ellipse cx="210" cy="320" rx="50" ry="40" fill="url(#g2)"/>
<ellipse cx="45" cy="350" rx="85" ry="50" fill="url(#g2)"/><ellipse cx="40" cy="340" rx="60" ry="40" fill="url(#g2)"/><ellipse cx="215" cy="375" rx="50" ry="20" fill="url(#g2)"/><path d="M150 376v9M158 372v12M170 374v10M178 378v7M196 370v13" stroke="#3e3422" stroke-width="1.2" opacity="0.35"/>
<ellipse cx="120" cy="150" rx="60" ry="45" fill="url(#g3)"/><ellipse cx="100" cy="113" rx="14" ry="12" fill="url(#g3)"/><ellipse cx="150" cy="121" rx="12" ry="14" fill="url(#g3)"/><ellipse cx="24" cy="188" rx="18" ry="14" fill="url(#g3)"/><rect y="290" width="260" height="99" fill="url(#bot)"/>
<ellipse cx="20" cy="230" rx="35" ry="45" fill="url(#g3)"/>
<ellipse cx="235" cy="250" rx="40" ry="60" fill="url(#g3)"/>
<path d="M60 80L230 140M150 230L215 390M10 170L90 320M170 40L255 115M90 260L30 389M200 150L120 260M20 90Q80 60 140 100M240 200L180 330M5 300L120 280M130 10L90 90" stroke="#efe4d4" stroke-width="0.5" opacity="0.4" fill="none"/>
<text x="6" y="12" font-size="8.6" font-family="Liberation Sans" font-weight="bold" fill="#5a5030" opacity="0.55" filter="url(#tb)" transform="rotate(5 6 12) scale(1 1.2)" letter-spacing="0.6">VE  TE ADLE  ES DOMINUM</text>
<rect x="0.5" y="0.5" width="259" height="387.5" fill="none" stroke="#fff" stroke-width="1" stroke-dasharray="1.5 1.5"/>
<rect x="0.5" y="0.5" width="259" height="387.5" fill="none" stroke="#000" stroke-width="1" stroke-dasharray="1.5 1.5" stroke-dashoffset="1.5"/>
</svg>
<div class="a" style="left:34px;top:469.5px;width:674px;height:8.5px;background:#444444;background:linear-gradient(#4a4a4a,#3e3e3e)"></div>
<div class="a" style="left:34px;top:469.5px;width:23.5px;height:8px;background:#383838;"></div>
<div class="t" style="left:37px;top:472px;font-size:5.2px;color:#e4e4e4;">16,67%</div>
<div class="a" style="left:57.5px;top:469.8px;width:91.2px;height:7.6px;background:#5a5a5a;"></div>
<div class="a" style="left:60.5px;top:471.2px;width:5px;height:5px;border-radius:50%;background:#d8d8d8"></div>
<div class="t" style="left:85px;top:472px;font-size:5.2px;color:#e2e2e2;">Док: 47,1М/123,1М</div>
<div class="a" style="left:148.7px;top:469.8px;width:5px;height:7.6px;background:#4e4e4e;"></div>
<svg style="left:148.5px;top:470px;" width="6" height="8" viewBox="0 0 6 8"><path d="M1.5 1.5L4.8 3.9L1.5 6.3Z" fill="#f0f0f0"/></svg>
<div class="a" style="left:0px;top:477.3px;width:900px;height:0.7px;background:#3a3a3a;"></div>
<div class="a" style="left:0px;top:0px;width:900px;height:13px;background:#525252;"></div>
<div class="a" style="left:0px;top:12px;width:900px;height:1px;background:#444444;"></div>
<div class="a" style="left:0px;top:13px;width:900px;height:1px;background:#5c5c5c;"></div>
<div class="t" style="left:3.6px;top:0px;font-size:9.5px;color:#b4c8ee;letter-spacing:0.6px">Ps</div>
<div class="a" style="left:39.3px;top:1.5px;width:52.3px;height:10.5px;background:#2c2c2c;"></div>
<div class="t" style="left:22px;top:5px;font-size:5.6px;color:#e4e4e4;">Файл</div>
<div class="t" style="left:42.7px;top:5px;font-size:5.6px;color:#e4e4e4;">Редактирование</div>
<div class="t" style="left:92px;top:5px;font-size:5.6px;color:#e4e4e4;">Изображение</div>
<div class="t" style="left:139.3px;top:5px;font-size:5.6px;color:#e4e4e4;">Слои</div>
<div class="t" style="left:160px;top:5px;font-size:5.6px;color:#e4e4e4;">Шрифт</div>
<div class="t" style="left:186.5px;top:5px;font-size:5.6px;color:#e4e4e4;">Выделение</div>
<div class="t" style="left:223.3px;top:5px;font-size:5.6px;color:#e4e4e4;">Фильтр</div>
<div class="t" style="left:251.3px;top:5px;font-size:5.6px;color:#e4e4e4;">3D</div>
<div class="t" style="left:266px;top:5px;font-size:5.6px;color:#e4e4e4;">Просмотр</div>
<div class="t" style="left:300.7px;top:5px;font-size:5.6px;color:#e4e4e4;">Окно</div>
<div class="t" style="left:321.2px;top:5px;font-size:5.6px;color:#e4e4e4;">Справка</div>
<div class="a" style="left:850.3px;top:0px;width:47.7px;height:8.6px;background:#3e3e3e;"></div>
<div class="a" style="left:850.8px;top:0px;width:12.3px;height:8.1px;background:#5e5e5e;background:linear-gradient(#646464,#575757)"></div>
<div class="a" style="left:864px;top:0px;width:12.3px;height:8.1px;background:#5e5e5e;background:linear-gradient(#646464,#575757)"></div>
<div class="a" style="left:877.2px;top:0px;width:20.3px;height:8.1px;background:#5e5e5e;background:linear-gradient(#646464,#575757)"></div>
<div class="a" style="left:854.8px;top:4.6px;width:5px;height:1.3px;background:#eeeeee;"></div>
<div class="a" style="left:867.3px;top:3px;width:4.5px;height:3.4px;border:1px solid #eee"></div>
<div class="a" style="left:868.8px;top:1.6px;width:4.5px;height:3.4px;border-top:1px solid #eee;border-right:1px solid #eee"></div>
<svg style="left:884px;top:1.6px;" width="7" height="6" viewBox="0 0 7 6"><path d="M1 0.5L6 5M6 0.5L1 5" stroke="#f0f0f0" stroke-width="1.3"/></svg>
<div class="a" style="left:0px;top:13.8px;width:900px;height:15.2px;background:#535353;"></div>
<div class="a" style="left:2px;top:15px;width:1px;height:12px;background:#6a6a6a;"></div>
<svg style="left:10px;top:16px;" width="9" height="8" viewBox="0 0 9 8"><rect x="0.5" y="0.5" width="1" height="1" fill="#cfcfcf"/><rect x="0.5" y="3.8" width="1" height="1" fill="#cfcfcf"/><rect x="0.5" y="7" width="1" height="1" fill="#cfcfcf"/><rect x="3.8" y="0.5" width="1" height="1" fill="#cfcfcf"/><rect x="3.8" y="7" width="1" height="1" fill="#cfcfcf"/><rect x="7" y="0.5" width="1" height="1" fill="#cfcfcf"/><rect x="7" y="3.8" width="1" height="1" fill="#cfcfcf"/><rect x="7" y="7" width="1" height="1" fill="#cfcfcf"/></svg>
<div class="a" style="left:22.5px;top:19.3px;width:2.5px;height:2.5px;background:#e8e8e8;"></div>
<div class="a" style="left:29px;top:15px;width:1px;height:12px;background:#444;"></div>
<div class="a" style="left:32.5px;top:17px;width:7px;height:8px;background:#3a3a3a;border:1px solid #2a2a2a"></div>
<div class="a" style="left:200px;top:17.3px;width:82px;height:8px;background:#656565;border:1px solid #3a3a3a;border-radius:1px"></div>
<div class="t" style="left:229px;top:19px;font-size:5.3px;color:#e6e6e6;">Обычный</div>
<svg style="left:277px;top:18px;" width="4" height="7" viewBox="0 0 4 7"><path d="M0.5 3L2 1.2L3.5 3ZM0.5 4L2 5.8L3.5 4Z" fill="#ddd"/></svg>
<div class="t" style="left:288.7px;top:19px;font-size:5.3px;color:#9c9c9c;">Шир.:</div>
<div class="a" style="left:306px;top:16.5px;width:18.7px;height:9.8px;background:#4a4a4a;border:1px solid #434343"></div>
<svg style="left:331px;top:18px;" width="7" height="7" viewBox="0 0 7 7"><path d="M1 5.5L5.5 1.5M3.8 1.2H5.8V3.2M1.2 3.8V5.8H3.2" stroke="#bdbdbd" stroke-width="0.8" fill="none"/></svg>
<div class="t" style="left:346px;top:19px;font-size:5.3px;color:#9c9c9c;">Выс.:</div>
<div class="a" style="left:362px;top:16.5px;width:18.7px;height:9.8px;background:#4a4a4a;border:1px solid #434343"></div>
<div class="a" style="left:390px;top:17.5px;width:45px;height:8px;background:#6a6a6a;border:1px solid #2f2f2f;border-radius:1px;background:linear-gradient(#727272,#5e5e5e)"></div>
<div class="t" style="left:395.5px;top:19px;font-size:5.3px;color:#f0f0f0;">Уточн. край...</div>
<div class="a" style="left:797.3px;top:16.7px;width:98px;height:10px;background:#5e5e5e;border:1px solid #3a3a3a;border-radius:1px;background:linear-gradient(#666,#585858)"></div>
<div class="t" style="left:800.5px;top:20px;font-size:5.4px;color:#e8e8e8;">Основная рабочая среда</div>
<svg style="left:891px;top:18.5px;" width="4" height="7" viewBox="0 0 4 7"><path d="M0.5 3L2 1.2L3.5 3ZM0.5 4L2 5.8L3.5 4Z" fill="#ddd"/></svg>
<div class="a" style="left:0px;top:28.5px;width:900px;height:0.8px;background:#3b3b3b;"></div>
<div class="a" style="left:0px;top:29px;width:33.5px;height:449px;background:#4e4d4e;"></div>
<div class="a" style="left:0px;top:29px;width:33.5px;height:5.7px;background:#383838;"></div>
<svg style="left:2px;top:30px;" width="8" height="4" viewBox="0 0 8 4"><path d="M1 2h5M0.8 1l-0.6 1 0.6 1M6 1l0.6 1-0.6 1" stroke="#bbb" stroke-width="0.6" fill="none"/></svg>
<div class="a" style="left:33.2px;top:29px;width:1px;height:449px;background:#3a3a3a;"></div>
<div class="a" style="left:11px;top:37.3px;width:12px;height:0.8px;background:#3e3e3e;"></div>
<div class="a" style="left:2.2px;top:42.4px;width:13.6px;height:11px;background:#3a3a3a;border:1px solid #2e2e2e"></div>
<svg style="left:2.8000000000000007px;top:42.5px;" width="12" height="10" viewBox="0 0 12 10"><g transform="translate(6 5) scale(0.9) translate(-6 -5)" opacity="0.95"><rect x="2" y="1.5" width="1.1" height="1.1" fill="#d0d0d0"/><rect x="2" y="4" width="1.1" height="1.1" fill="#d0d0d0"/><rect x="2" y="6.5" width="1.1" height="1.1" fill="#d0d0d0"/><rect x="4.5" y="1.5" width="1.1" height="1.1" fill="#d0d0d0"/><rect x="4.5" y="6.5" width="1.1" height="1.1" fill="#d0d0d0"/><rect x="7" y="1.5" width="1.1" height="1.1" fill="#d0d0d0"/><rect x="7" y="6.5" width="1.1" height="1.1" fill="#d0d0d0"/><rect x="9.5" y="1.5" width="1.1" height="1.1" fill="#d0d0d0"/><rect x="9.5" y="4" width="1.1" height="1.1" fill="#d0d0d0"/><rect x="9.5" y="6.5" width="1.1" height="1.1" fill="#d0d0d0"/></g></svg>
<div class="a" style="left:13.3px;top:51.1px;width:1.3px;height:1.3px;background:#dcdcdc;"></div>
<svg style="left:18.6px;top:42.5px;" width="12" height="10" viewBox="0 0 12 10"><g transform="translate(6 5) scale(0.9) translate(-6 -5)" opacity="0.95"><path d="M2 1.5L2 8L4 6.2L6 8.5L7 8L5.2 5.5L7.6 5.2Z" fill="#ddd"/><path d="M8 4.5h3M9.5 3v3" stroke="#bbb" stroke-width="0.7"/></g></svg>
<svg style="left:2.8000000000000007px;top:55px;" width="12" height="10" viewBox="0 0 12 10"><g transform="translate(6 5) scale(0.9) translate(-6 -5)" opacity="0.95"><ellipse cx="6" cy="4.3" rx="4.2" ry="2.8" stroke="#d8d8d8" stroke-width="1.1" fill="none"/><path d="M3 6.5q-1 2 1 3" stroke="#ccc" stroke-width="0.8" fill="none"/></g></svg>
<div class="a" style="left:13.3px;top:63.6px;width:1.3px;height:1.3px;background:#dcdcdc;"></div>
<svg style="left:18.6px;top:55px;" width="12" height="10" viewBox="0 0 12 10"><g transform="translate(6 5) scale(0.9) translate(-6 -5)" opacity="0.95"><path d="M10 1L5 6" stroke="#ddd" stroke-width="1.2"/><path d="M5 5.5L2.2 8.8L3 9.5L6.2 6.6Z" fill="#ddd"/></g></svg>
<div class="a" style="left:29.1px;top:63.6px;width:1.3px;height:1.3px;background:#dcdcdc;"></div>
<svg style="left:2.8000000000000007px;top:67.4px;" width="12" height="10" viewBox="0 0 12 10"><g transform="translate(6 5) scale(0.9) translate(-6 -5)" opacity="0.95"><path d="M3 1v8h8M1 3h8v8" stroke="#d8d8d8" stroke-width="1.3" fill="none"/></g></svg>
<div class="a" style="left:13.3px;top:76.0px;width:1.3px;height:1.3px;background:#dcdcdc;"></div>
<svg style="left:18.6px;top:67.4px;" width="12" height="10" viewBox="0 0 12 10"><g transform="translate(6 5) scale(0.9) translate(-6 -5)" opacity="0.95"><path d="M10 1.5L3.5 8" stroke="#ddd" stroke-width="1.5"/><circle cx="8.7" cy="2.8" r="1.3" fill="#ddd"/></g></svg>
<div class="a" style="left:29.1px;top:76.0px;width:1.3px;height:1.3px;background:#dcdcdc;"></div>
<svg style="left:2.8000000000000007px;top:80.6px;" width="12" height="10" viewBox="0 0 12 10"><g transform="translate(6 5) scale(0.9) translate(-6 -5)" opacity="0.95"><rect x="1.5" y="2.5" width="9" height="5" rx="2.5" fill="#cfcfcf"/><rect x="4" y="3.5" width="4" height="3" fill="#888"/></g></svg>
<div class="a" style="left:13.3px;top:89.19999999999999px;width:1.3px;height:1.3px;background:#dcdcdc;"></div>
<svg style="left:18.6px;top:80.6px;" width="12" height="10" viewBox="0 0 12 10"><g transform="translate(6 5) scale(0.9) translate(-6 -5)" opacity="0.95"><path d="M11 0.5L4.5 6.5" stroke="#ddd" stroke-width="1.3"/><path d="M4.5 6L1.5 9.5L5.5 7.5Z" fill="#ddd"/></g></svg>
<div class="a" style="left:29.1px;top:89.19999999999999px;width:1.3px;height:1.3px;background:#dcdcdc;"></div>
<svg style="left:2.8000000000000007px;top:93px;" width="12" height="10" viewBox="0 0 12 10"><g transform="translate(6 5) scale(0.9) translate(-6 -5)" opacity="0.95"><rect x="4.5" y="0.5" width="3" height="4" rx="1.2" fill="#d8d8d8"/><rect x="2" y="4.5" width="8" height="2.6" fill="#d8d8d8"/><rect x="2" y="8" width="8" height="1.2" fill="#d8d8d8"/></g></svg>
<div class="a" style="left:13.3px;top:101.6px;width:1.3px;height:1.3px;background:#dcdcdc;"></div>
<svg style="left:18.6px;top:93px;" width="12" height="10" viewBox="0 0 12 10"><g transform="translate(6 5) scale(0.9) translate(-6 -5)" opacity="0.95"><path d="M11 1L5 6" stroke="#ddd" stroke-width="1.2"/><path d="M5 5.5L2 9L5.8 7Z" fill="#ddd"/><path d="M1 2.5q2 -2 4 0" stroke="#bbb" stroke-width="0.7" fill="none"/></g></svg>
<div class="a" style="left:29.1px;top:101.6px;width:1.3px;height:1.3px;background:#dcdcdc;"></div>
<svg style="left:2.8000000000000007px;top:105px;" width="12" height="10" viewBox="0 0 12 10"><g transform="translate(6 5) scale(0.9) translate(-6 -5)" opacity="0.95"><path d="M2 8L8 1.5L11 4L5 10Z" fill="#d0d0d0"/><path d="M2 8L4.5 5.5" stroke="#777" stroke-width="1"/></g></svg>
<div class="a" style="left:13.3px;top:113.6px;width:1.3px;height:1.3px;background:#dcdcdc;"></div>
<svg style="left:18.6px;top:105px;" width="12" height="10" viewBox="0 0 12 10"><g transform="translate(6 5) scale(0.9) translate(-6 -5)" opacity="0.95"><path d="M2.5 5L6 1.5L9.5 5L6 8.5Z" fill="#d0d0d0"/><path d="M9 5q2 2 1.2 4" stroke="#ccc" stroke-width="0.9" fill="none"/></g></svg>
<div class="a" style="left:29.1px;top:113.6px;width:1.3px;height:1.3px;background:#dcdcdc;"></div>
<svg style="left:2.8000000000000007px;top:117px;" width="12" height="10" viewBox="0 0 12 10"><g transform="translate(6 5) scale(0.9) translate(-6 -5)" opacity="0.95"><path d="M6 0.5Q2.5 5 2.5 6.8A3.5 3.5 0 0 0 9.5 6.8Q9.5 5 6 0.5Z" fill="#d0d0d0"/></g></svg>
<div class="a" style="left:13.3px;top:125.6px;width:1.3px;height:1.3px;background:#dcdcdc;"></div>
<svg style="left:18.6px;top:117px;" width="12" height="10" viewBox="0 0 12 10"><g transform="translate(6 5) scale(0.9) translate(-6 -5)" opacity="0.95"><circle cx="4.5" cy="4" r="2.6" fill="#d8d8d8"/><path d="M6 5.5L10 9" stroke="#d8d8d8" stroke-width="1.4"/></g></svg>
<div class="a" style="left:29.1px;top:125.6px;width:1.3px;height:1.3px;background:#dcdcdc;"></div>
<svg style="left:2.8000000000000007px;top:132.7px;" width="12" height="10" viewBox="0 0 12 10"><g transform="translate(6 5) scale(0.9) translate(-6 -5)" opacity="0.95"><path d="M9.5 1.5L3 8L1.5 9.5L2.5 6L8 0.5Z" stroke="#d8d8d8" stroke-width="1" fill="none"/><path d="M8 3L10.5 5.5" stroke="#ddd" stroke-width="1"/></g></svg>
<div class="a" style="left:13.3px;top:141.29999999999998px;width:1.3px;height:1.3px;background:#dcdcdc;"></div>
<svg style="left:18.6px;top:132.7px;" width="12" height="10" viewBox="0 0 12 10"><g transform="translate(6 5) scale(0.9) translate(-6 -5)" opacity="0.95"><text x="1.5" y="9.5" font-family="Liberation Serif" font-size="11" fill="#ddd">T</text></g></svg>
<svg style="left:2.8000000000000007px;top:144.2px;" width="12" height="10" viewBox="0 0 12 10"><g transform="translate(6 5) scale(0.9) translate(-6 -5)" opacity="0.95"><path d="M2 1L2 9.5L4.5 7.5L6.5 10L7.5 9.5L5.8 7L8.5 6.5Z" fill="none" stroke="#ddd" stroke-width="0.9"/></g></svg>
<div class="a" style="left:13.3px;top:152.79999999999998px;width:1.3px;height:1.3px;background:#dcdcdc;"></div>
<svg style="left:18.6px;top:144.2px;" width="12" height="10" viewBox="0 0 12 10"><g transform="translate(6 5) scale(0.9) translate(-6 -5)" opacity="0.95"><path d="M6 1L8 3L11 3.5L9.5 6.5L11 9.5L7.5 9L5 10.5L4 7.5L1 6L3.5 3.5Z" fill="#cdcdcd"/></g></svg>
<div class="a" style="left:29.1px;top:152.79999999999998px;width:1.3px;height:1.3px;background:#dcdcdc;"></div>
<svg style="left:2.8000000000000007px;top:155.7px;" width="12" height="10" viewBox="0 0 12 10"><g transform="translate(6 5) scale(0.9) translate(-6 -5)" opacity="0.95"><path d="M3 9.5L1.5 6L2 5L3.5 6.5L3.5 2L4.5 1.5L5 5L5.5 1L6.5 1L7 5L7.5 1.5L8.5 2L8.5 5.5L9.5 4.5L10.5 5L9 9.5Z" fill="#d8d8d8"/></g></svg>
<div class="a" style="left:13.3px;top:164.29999999999998px;width:1.3px;height:1.3px;background:#dcdcdc;"></div>
<svg style="left:18.6px;top:155.7px;" width="12" height="10" viewBox="0 0 12 10"><g transform="translate(6 5) scale(0.9) translate(-6 -5)" opacity="0.95"><circle cx="4.8" cy="4.2" r="3" stroke="#ddd" stroke-width="1.2" fill="none"/><path d="M7 6.5L10.5 9.8" stroke="#ddd" stroke-width="1.6"/></g></svg>
<div class="a" style="left:3px;top:129px;width:28px;height:0.7px;background:#464646;"></div>
<div class="a" style="left:3px;top:155.3px;width:28px;height:0.7px;background:#464646;"></div>
<div class="a" style="left:3px;top:167.7px;width:28px;height:0.7px;background:#464646;"></div>
<div class="a" style="left:3px;top:79px;width:28px;height:0.7px;background:#464646;"></div>
<div class="a" style="left:13px;top:177.8px;width:12px;height:12px;background:#fbfbfb;box-shadow:0 0 0.8px #333"></div>
<div class="a" style="left:5.6px;top:169.4px;width:12.4px;height:12.5px;background:#159fe0;box-shadow:0 0 0.8px #222"></div>
<svg style="left:20px;top:170.5px;" width="6" height="6" viewBox="0 0 6 6"><path d="M1 1.5Q4.5 1 4.5 4.5" stroke="#ccc" stroke-width="0.8" fill="none"/><path d="M0.5 0.5L2 1.5L0.5 2.5Z M3.5 4L4.5 5.5L5.5 4Z" fill="#ccc"/></svg>
<svg style="left:4px;top:183px;" width="6" height="6" viewBox="0 0 6 6"><rect x="0.5" y="0.5" width="3.5" height="3.5" fill="#ddd"/><rect x="2" y="2" width="3.5" height="3.5" fill="#222" stroke="#ddd" stroke-width="0.6"/></svg>
<svg style="left:4px;top:195px;" width="10" height="8" viewBox="0 0 10 8"><rect x="1" y="1" width="8" height="6" fill="none" stroke="#cfcfcf" stroke-width="0.9"/><circle cx="5" cy="4" r="1.8" fill="none" stroke="#cfcfcf" stroke-width="0.9"/></svg>
<svg style="left:19px;top:194.5px;" width="11" height="9" viewBox="0 0 11 9"><rect x="3" y="0.8" width="7" height="5" fill="none" stroke="#cfcfcf" stroke-width="0.8"/><rect x="1" y="2.5" width="7" height="5" fill="#535353" stroke="#cfcfcf" stroke-width="0.8"/></svg>
<div class="a" style="left:28.5px;top:203px;width:1px;height:1px;background:#ccc;"></div>
<div class="a" style="left:39.5px;top:10.5px;width:198.5px;height:430.5px;background:#f0f0f0;box-shadow:1px 1px 1px rgba(0,0,0,0.35);border:0.5px solid #b5b5b5"></div>
<div class="a" style="left:38.7px;top:10.5px;width:1px;height:430.5px;background:#262626;"></div>
<div class="t" style="left:50.7px;top:16px;font-size:6.95px;color:#1b1b1b;-webkit-text-stroke:0.15px #1b1b1b">Отменить: Выделить холст</div>
<div class="t" style="right:670.80px;top:16px;font-size:6.95px;color:#1b1b1b;-webkit-text-stroke:0.15px #1b1b1b">Ctrl+Z</div>
<div class="t" style="left:50.7px;top:27px;font-size:6.95px;color:#9d9d9d;-webkit-text-stroke:0.15px #9d9d9d">Шаг вперед</div>
<div class="t" style="right:670.80px;top:27px;font-size:6.95px;color:#9d9d9d;-webkit-text-stroke:0.15px #9d9d9d">Shift+Ctrl+Z</div>
<div class="t" style="left:50.7px;top:38px;font-size:6.95px;color:#1b1b1b;-webkit-text-stroke:0.15px #1b1b1b">Шаг назад</div>
<div class="t" style="right:670.80px;top:38px;font-size:6.95px;color:#1b1b1b;-webkit-text-stroke:0.15px #1b1b1b">Alt+Ctrl+Z</div>
<div class="a" style="left:42.5px;top:47.800000000000004px;width:193.5px;height:0.8px;background:#d4d4d4;"></div>
<div class="a" style="left:42.5px;top:48.6px;width:193.5px;height:0.6px;background:#fbfbfb;"></div>
<div class="t" style="left:50.7px;top:56px;font-size:6.95px;color:#9d9d9d;-webkit-text-stroke:0.15px #9d9d9d">Ослабить...</div>
<div class="t" style="right:670.80px;top:56px;font-size:6.95px;color:#9d9d9d;-webkit-text-stroke:0.15px #9d9d9d">Shift+Ctrl+F</div>
<div class="a" style="left:42.5px;top:64.88px;width:193.5px;height:0.8px;background:#d4d4d4;"></div>
<div class="a" style="left:42.5px;top:65.67999999999999px;width:193.5px;height:0.6px;background:#fbfbfb;"></div>
<div class="t" style="left:50.7px;top:73px;font-size:6.95px;color:#1b1b1b;-webkit-text-stroke:0.15px #1b1b1b">Вырезать</div>
<div class="t" style="right:670.80px;top:73px;font-size:6.95px;color:#1b1b1b;-webkit-text-stroke:0.15px #1b1b1b">Ctrl+X</div>
<div class="t" style="left:50.7px;top:84px;font-size:6.95px;color:#1b1b1b;-webkit-text-stroke:0.15px #1b1b1b">Скопировать</div>
<div class="t" style="right:670.80px;top:84px;font-size:6.95px;color:#1b1b1b;-webkit-text-stroke:0.15px #1b1b1b">Ctrl+C</div>
<div class="t" style="left:50.7px;top:95px;font-size:6.95px;color:#1b1b1b;-webkit-text-stroke:0.15px #1b1b1b">Скопировать совмещенные данные</div>
<div class="t" style="right:670.80px;top:95px;font-size:6.95px;color:#1b1b1b;-webkit-text-stroke:0.15px #1b1b1b">Shift+Ctrl+C</div>
<div class="t" style="left:50.7px;top:106px;font-size:6.95px;color:#1b1b1b;-webkit-text-stroke:0.15px #1b1b1b">Вставить</div>
<div class="t" style="right:670.80px;top:106px;font-size:6.95px;color:#1b1b1b;-webkit-text-stroke:0.15px #1b1b1b">Ctrl+V</div>
<div class="a" style="left:40.5px;top:112.63999999999999px;width:196.5px;height:11px;background:#0d6ed6;"></div>
<div class="t" style="left:50.7px;top:117px;font-size:6.95px;color:#eaf4ff;-webkit-text-stroke:0.15px #eaf4ff">Специальная вставка</div>
<svg style="left:229.8px;top:115.33999999999999px;" width="4" height="6" viewBox="0 0 4 6"><path d="M0.5 0.8L3.2 3L0.5 5.2Z" fill="#ffffff"/></svg>
<div class="t" style="left:50.7px;top:128px;font-size:6.95px;color:#1b1b1b;-webkit-text-stroke:0.15px #1b1b1b">Очистить</div>
<div class="a" style="left:42.5px;top:137.60999999999999px;width:193.5px;height:0.8px;background:#d4d4d4;"></div>
<div class="a" style="left:42.5px;top:138.41px;width:193.5px;height:0.6px;background:#fbfbfb;"></div>
<div class="t" style="left:50.7px;top:145px;font-size:6.95px;color:#9d9d9d;-webkit-text-stroke:0.15px #9d9d9d">Проверка орфографии...</div>
<div class="t" style="left:50.7px;top:156px;font-size:6.95px;color:#9d9d9d;-webkit-text-stroke:0.15px #9d9d9d">Поиск и замена текста...</div>
<div class="a" style="left:42.5px;top:165.81999999999996px;width:193.5px;height:0.8px;background:#d4d4d4;"></div>
<div class="a" style="left:42.5px;top:166.61999999999998px;width:193.5px;height:0.6px;background:#fbfbfb;"></div>
<div class="t" style="left:50.7px;top:174px;font-size:6.95px;color:#1b1b1b;-webkit-text-stroke:0.15px #1b1b1b">Выполнить заливку...</div>
<div class="t" style="right:670.80px;top:174px;font-size:6.95px;color:#1b1b1b;-webkit-text-stroke:0.15px #1b1b1b">Shift+F5</div>
<div class="t" style="left:50.7px;top:185px;font-size:6.95px;color:#1b1b1b;-webkit-text-stroke:0.15px #1b1b1b">Выполнить обводку...</div>
<div class="a" style="left:42.5px;top:194.02999999999994px;width:193.5px;height:0.8px;background:#d4d4d4;"></div>
<div class="a" style="left:42.5px;top:194.82999999999996px;width:193.5px;height:0.6px;background:#fbfbfb;"></div>
<div class="t" style="left:50.7px;top:202px;font-size:6.95px;color:#1b1b1b;-webkit-text-stroke:0.15px #1b1b1b">Масштаб с учетом содержимого</div>
<div class="t" style="right:670.80px;top:202px;font-size:6.95px;color:#1b1b1b;-webkit-text-stroke:0.15px #1b1b1b">Alt+Shift+Ctrl+C</div>
<div class="t" style="left:50.7px;top:213px;font-size:6.95px;color:#1b1b1b;-webkit-text-stroke:0.15px #1b1b1b">Марионеточная деформация</div>
<div class="t" style="left:50.7px;top:224px;font-size:6.95px;color:#1b1b1b;-webkit-text-stroke:0.15px #1b1b1b">Свободное трансформирование</div>
<div class="t" style="right:670.80px;top:224px;font-size:6.95px;color:#1b1b1b;-webkit-text-stroke:0.15px #1b1b1b">Ctrl+T</div>
<div class="t" style="left:50.7px;top:235px;font-size:6.95px;color:#1b1b1b;-webkit-text-stroke:0.15px #1b1b1b">Трансформирование</div>
<svg style="left:229.8px;top:233.3599999999999px;" width="4" height="6" viewBox="0 0 4 6"><path d="M0.5 0.8L3.2 3L0.5 5.2Z" fill="#222"/></svg>
<div class="t" style="left:50.7px;top:246px;font-size:6.95px;color:#9d9d9d;-webkit-text-stroke:0.15px #9d9d9d">Автоматически выравнивать слои...</div>
<div class="t" style="left:50.7px;top:257px;font-size:6.95px;color:#9d9d9d;-webkit-text-stroke:0.15px #9d9d9d">Автоналожение слоев...</div>
<div class="a" style="left:42.5px;top:266.75999999999993px;width:193.5px;height:0.8px;background:#d4d4d4;"></div>
<div class="a" style="left:42.5px;top:267.55999999999995px;width:193.5px;height:0.6px;background:#fbfbfb;"></div>
<div class="t" style="left:50.7px;top:274px;font-size:6.95px;color:#1b1b1b;-webkit-text-stroke:0.15px #1b1b1b">Определить кисть...</div>
<div class="t" style="left:50.7px;top:286px;font-size:6.95px;color:#1b1b1b;-webkit-text-stroke:0.15px #1b1b1b">Определить узор...</div>
<div class="t" style="left:50.7px;top:297px;font-size:6.95px;color:#9d9d9d;-webkit-text-stroke:0.15px #9d9d9d">Определить произвольную фигуру...</div>
<div class="a" style="left:42.5px;top:306.0999999999999px;width:193.5px;height:0.8px;background:#d4d4d4;"></div>
<div class="a" style="left:42.5px;top:306.8999999999999px;width:193.5px;height:0.6px;background:#fbfbfb;"></div>
<div class="t" style="left:50.7px;top:314px;font-size:6.95px;color:#1b1b1b;-webkit-text-stroke:0.15px #1b1b1b">Удалить из памяти</div>
<svg style="left:229.8px;top:312.03999999999985px;" width="4" height="6" viewBox="0 0 4 6"><path d="M0.5 0.8L3.2 3L0.5 5.2Z" fill="#222"/></svg>
<div class="a" style="left:42.5px;top:323.1799999999999px;width:193.5px;height:0.8px;background:#d4d4d4;"></div>
<div class="a" style="left:42.5px;top:323.9799999999999px;width:193.5px;height:0.6px;background:#fbfbfb;"></div>
<div class="t" style="left:50.7px;top:331px;font-size:6.95px;color:#1b1b1b;-webkit-text-stroke:0.15px #1b1b1b">Наборы параметров Adobe PDF...</div>
<div class="t" style="left:50.7px;top:342px;font-size:6.95px;color:#1b1b1b;-webkit-text-stroke:0.15px #1b1b1b">Наборы</div>
<svg style="left:229.8px;top:340.24999999999983px;" width="4" height="6" viewBox="0 0 4 6"><path d="M0.5 0.8L3.2 3L0.5 5.2Z" fill="#222"/></svg>
<div class="t" style="left:50.7px;top:353px;font-size:6.95px;color:#1b1b1b;-webkit-text-stroke:0.15px #1b1b1b">Удаленные соединения...</div>
<div class="a" style="left:42.5px;top:362.51999999999987px;width:193.5px;height:0.8px;background:#d4d4d4;"></div>
<div class="a" style="left:42.5px;top:363.3199999999999px;width:193.5px;height:0.6px;background:#fbfbfb;"></div>
<div class="t" style="left:50.7px;top:370px;font-size:6.95px;color:#1b1b1b;-webkit-text-stroke:0.15px #1b1b1b">Настройка цветов...</div>
<div class="t" style="right:670.80px;top:370px;font-size:6.95px;color:#1b1b1b;-webkit-text-stroke:0.15px #1b1b1b">Shift+Ctrl+K</div>
<div class="t" style="left:50.7px;top:381px;font-size:6.95px;color:#1b1b1b;-webkit-text-stroke:0.15px #1b1b1b">Назначить профиль...</div>
<div class="t" style="left:50.7px;top:393px;font-size:6.95px;color:#1b1b1b;-webkit-text-stroke:0.15px #1b1b1b">Преобразовать в профиль...</div>
<div class="a" style="left:42.5px;top:401.85999999999984px;width:193.5px;height:0.8px;background:#d4d4d4;"></div>
<div class="a" style="left:42.5px;top:402.65999999999985px;width:193.5px;height:0.6px;background:#fbfbfb;"></div>
<div class="t" style="left:50.7px;top:410px;font-size:6.95px;color:#1b1b1b;-webkit-text-stroke:0.15px #1b1b1b">Клавиатурные сокращения...</div>
<div class="t" style="right:670.80px;top:410px;font-size:6.95px;color:#1b1b1b;-webkit-text-stroke:0.15px #1b1b1b">Alt+Shift+Ctrl+K</div>
<div class="t" style="left:50.7px;top:421px;font-size:6.95px;color:#1b1b1b;-webkit-text-stroke:0.15px #1b1b1b">Меню...</div>
<div class="t" style="right:670.80px;top:421px;font-size:6.95px;color:#1b1b1b;-webkit-text-stroke:0.15px #1b1b1b">Alt+Shift+Ctrl+M</div>
<div class="t" style="left:50.7px;top:432px;font-size:6.95px;color:#1b1b1b;-webkit-text-stroke:0.15px #1b1b1b">Установки</div>
<svg style="left:229.8px;top:430.0599999999998px;" width="4" height="6" viewBox="0 0 4 6"><path d="M0.5 0.8L3.2 3L0.5 5.2Z" fill="#222"/></svg>
<div class="a" style="left:235.8px;top:112.5px;width:119px;height:35px;background:#f0f0f0;box-shadow:1.5px 1.5px 1.5px rgba(0,0,0,0.4);border:0.5px solid #aaa"></div>
<div class="a" style="left:236.8px;top:124.9px;width:117px;height:10.8px;background:#0d6ed6;"></div>
<div class="t" style="left:246.7px;top:118px;font-size:6.95px;color:#1b1b1b;">Вставить вместо</div>
<div class="t" style="right:554.20px;top:118px;font-size:6.95px;color:#1b1b1b;">Shift+Ctrl+V</div>
<div class="t" style="left:246.7px;top:129px;font-size:6.95px;color:#eaf4ff;">Вставить в</div>
<div class="t" style="right:554.20px;top:129px;font-size:6.95px;color:#eaf4ff;">Alt+Shift+Ctrl+V</div>
<div class="t" style="left:246.7px;top:140px;font-size:6.95px;color:#1b1b1b;">Вставить за пределами</div>
<div class="a" style="left:716.5px;top:29px;width:183.5px;height:449px;background:#535353;"></div>
<div class="a" style="left:716.5px;top:29px;width:183.5px;height:5.2px;background:#3c3c3c;"></div>
<svg style="left:728px;top:30px;" width="6" height="4" viewBox="0 0 6 4"><path d="M0.5 0.5L2 2L0.5 3.5M3 0.5L4.5 2L3 3.5" stroke="#ccc" stroke-width="0.7" fill="none"/></svg>
<svg style="left:893px;top:30px;" width="6" height="4" viewBox="0 0 6 4"><path d="M0.5 0.5L2 2L0.5 3.5M3 0.5L4.5 2L3 3.5" stroke="#ccc" stroke-width="0.7" fill="none"/></svg>
<div class="a" style="left:734px;top:34px;width:2px;height:444px;background:#3a3a3a;"></div>
<div class="a" style="left:716.5px;top:34px;width:17.5px;height:444px;background:#4d4c4d;"></div>
<div class="a" style="left:716.5px;top:35px;width:17.5px;height:1px;background:#444;"></div>
<svg style="left:720px;top:42px;opacity:0.78" width="12" height="10" viewBox="0 0 12 10"><rect x="2" y="1" width="2" height="2" fill="#ccc"/><rect x="2" y="4" width="2" height="2" fill="#ccc"/><rect x="2" y="7" width="2" height="2" fill="#ccc"/><path d="M6 2q4 0 3 5" stroke="#ccc" stroke-width="1" fill="none"/><path d="M7.5 6.5L9 8.5L10.5 6.5Z" fill="#ccc"/></svg>
<svg style="left:720px;top:54px;opacity:0.78" width="12" height="10" viewBox="0 0 12 10"><path d="M2.5 1L10 5L2.5 9Z" fill="#cfcfcf"/></svg>
<div class="a" style="left:718px;top:66px;width:14px;height:0.7px;background:#444;"></div>
<svg style="left:720px;top:71px;opacity:0.78" width="12" height="10" viewBox="0 0 12 10"><circle cx="6" cy="5" r="4" fill="#cfcfcf"/><path d="M3.5 3.5L6 5L8.5 3.5M6 5V8" stroke="#555" stroke-width="0.9" fill="none"/></svg>
<div class="a" style="left:718px;top:85px;width:14px;height:0.7px;background:#444;"></div>
<svg style="left:720px;top:91.5px;opacity:0.78" width="12" height="10" viewBox="0 0 12 10"><path d="M3 1l1 2M6 0.5v2.5M9 1l-1 2M4 3l1 3M8 3l-1 3" stroke="#ccc" stroke-width="0.8"/><rect x="4" y="6" width="4" height="3.5" fill="#ccc"/></svg>
<svg style="left:720px;top:105px;opacity:0.78" width="12" height="10" viewBox="0 0 12 10"><path d="M1 2.5h10M1 8h10" stroke="#ccc" stroke-width="0.8"/><rect x="3" y="3.5" width="5" height="2.5" fill="#ccc"/><path d="M8 5L11 3V7Z" fill="#ccc"/></svg>
<svg style="left:720px;top:118.5px;opacity:0.78" width="12" height="10" viewBox="0 0 12 10"><circle cx="3.5" cy="3" r="1.8" fill="#ccc"/><rect x="6.5" y="1.5" width="4" height="3" fill="#ccc"/><rect x="1" y="6.5" width="10" height="2" fill="#ccc"/></svg>
<svg style="left:720px;top:131.5px;opacity:0.78" width="12" height="10" viewBox="0 0 12 10"><text x="2" y="8.5" font-family="Liberation Sans" font-size="8.5" fill="#ccc">A</text><path d="M9 1.5v7" stroke="#ccc" stroke-width="0.8"/></svg>
<svg style="left:720px;top:144.5px;opacity:0.78" width="12" height="10" viewBox="0 0 12 10"><path d="M3 2h6v1h-1v6h-1v-6h-1v6h-1v-3.5A1.8 1.8 0 0 1 3 2Z" fill="#ccc"/></svg>
<div class="a" style="left:716.5px;top:157.3px;width:17.5px;height:0.8px;background:#3a3a3a;"></div>
<div class="a" style="left:736px;top:34px;width:161.5px;height:61.5px;background:#535353;"></div>
<div class="a" style="left:736px;top:34px;width:161.5px;height:9px;background:#424242;"></div>
<div class="a" style="left:736px;top:34.5px;width:18.5px;height:8.5px;background:#535353;"></div>
<div class="t" style="left:738.8px;top:38px;font-size:5.4px;color:#f0f0f0;">Цвет</div>
<div class="t" style="left:757.8px;top:38px;font-size:5.4px;color:#b8b8b8;">Образцы</div>
<svg style="left:891px;top:36px;" width="8" height="5" viewBox="0 0 8 5"><path d="M0.5 1.5L2 3L3.5 1.5Z" fill="#ccc"/><path d="M4.5 1h3M4.5 2.3h3M4.5 3.6h3" stroke="#bbb" stroke-width="0.6"/></svg>
<div class="a" style="left:742.8px;top:53.3px;width:9.2px;height:8.7px;background:#ffffff;border:0.5px solid #888"></div>
<div class="a" style="left:738.4px;top:48.9px;width:8.5px;height:8.1px;background:#1c9ee4;border:0.6px solid #d0e8f8"></div>
<div class="t" style="left:760.3px;top:50px;font-size:5.3px;color:#e0e0e0;">R</div>
<div class="t" style="left:760.3px;top:62px;font-size:5.3px;color:#e0e0e0;">G</div>
<div class="t" style="left:760.3px;top:74px;font-size:5.3px;color:#e0e0e0;">B</div>
<div class="a" style="left:767.3px;top:49.3px;width:92.7px;height:3px;background:linear-gradient(90deg,#3aa3dc,#9aa0e0 50%,#e0a0d8);"></div>
<div class="a" style="left:767.3px;top:61px;width:92.7px;height:3px;background:linear-gradient(90deg,#1a20c8,#2a80d8 50%,#30d8d0);"></div>
<div class="a" style="left:767.3px;top:72.6px;width:92.7px;height:3px;background:linear-gradient(90deg,#38985a,#3a9ea0 50%,#40a0e0);"></div>
<svg style="left:764.8px;top:52.5px;" width="5" height="4" viewBox="0 0 5 4"><path d="M2.5 0.3L4.7 2.5V3.7H0.3V2.5Z" fill="#eee"/><circle cx="2.5" cy="2.6" r="0.7" fill="#777"/></svg>
<svg style="left:821.5px;top:64.2px;" width="5" height="4" viewBox="0 0 5 4"><path d="M2.5 0.3L4.7 2.5V3.7H0.3V2.5Z" fill="#eee"/><circle cx="2.5" cy="2.6" r="0.7" fill="#777"/></svg>
<svg style="left:843.5px;top:76px;" width="5" height="4" viewBox="0 0 5 4"><path d="M2.5 0.3L4.7 2.5V3.7H0.3V2.5Z" fill="#eee"/><circle cx="2.5" cy="2.6" r="0.7" fill="#777"/></svg>
<div class="a" style="left:863.3px;top:47.8px;width:23.3px;height:8.7px;background:#404040;border:0.5px solid #383838"></div>
<div class="t" style="left:865.5px;top:51px;font-size:5.5px;color:#f0f0f0;">0</div>
<div class="a" style="left:863.3px;top:59.8px;width:23.3px;height:8.7px;background:#404040;border:0.5px solid #383838"></div>
<div class="t" style="left:865.5px;top:63px;font-size:5.5px;color:#f0f0f0;">157</div>
<div class="a" style="left:863.3px;top:71.4px;width:23.3px;height:8.7px;background:#404040;border:0.5px solid #383838"></div>
<div class="t" style="left:865.5px;top:74px;font-size:5.5px;color:#f0f0f0;">218</div>
<div class="a" style="left:770.3px;top:86.2px;width:90px;height:6.5px;background:linear-gradient(90deg,#f03020 0%,#f0e020 17%,#20b030 32%,#30c0e0 47%,#2040b0 60%,#602090 70%,#d02080 85%,#e01030 100%)"></div>
<div class="a" style="left:770.3px;top:86.2px;width:90px;height:6.5px;background:linear-gradient(180deg,rgba(255,255,255,0.85) 0%,rgba(255,255,255,0) 40%,rgba(0,0,0,0) 55%,rgba(0,0,0,0.8) 100%)"></div>
<div class="a" style="left:860.3px;top:86.2px;width:3.7px;height:3.2px;background:#fff;"></div>
<div class="a" style="left:860.3px;top:89.4px;width:3.7px;height:3.3px;background:#000;"></div>
<div class="a" style="left:736px;top:95.5px;width:161.5px;height:1.5px;background:#3a3a3a;"></div>
<div class="a" style="left:736px;top:97px;width:161.5px;height:60.5px;background:#535353;"></div>
<div class="a" style="left:736px;top:97px;width:161.5px;height:8.2px;background:#424242;"></div>
<div class="a" style="left:736px;top:97.5px;width:33.7px;height:7.7px;background:#535353;"></div>
<div class="t" style="left:738.5px;top:100px;font-size:5.4px;color:#f0f0f0;">Коррекция</div>
<div class="t" style="left:773px;top:100px;font-size:5.4px;color:#b8b8b8;">Стили</div>
<svg style="left:891px;top:99px;" width="8" height="5" viewBox="0 0 8 5"><path d="M0.5 1.5L2 3L3.5 1.5Z" fill="#ccc"/><path d="M4.5 1h3M4.5 2.3h3M4.5 3.6h3" stroke="#bbb" stroke-width="0.6"/></svg>
<div class="t" style="left:739.5px;top:110px;font-size:5.6px;color:#f4f4f4;font-weight:bold">Добавить корректировку</div>
<svg style="left:790.7px;top:119px;" width="9" height="8" viewBox="0 0 9 8"><circle cx="4.5" cy="4" r="1.8" fill="#ddd"/><path d="M4.5 0v1.3M4.5 6.7V8M0.5 4h1.3M7.2 4h1.3M1.7 1.2l1 1M6.3 5.8l1 1M7.3 1.2l-1 1M2.7 5.8l-1 1" stroke="#ddd" stroke-width="0.7"/></svg>
<svg style="left:801.9000000000001px;top:119px;" width="9" height="8" viewBox="0 0 9 8"><path d="M0.5 7.5V5L2 3.5L3 5L4.5 2.5L6 4.5L7 3L8.5 5V7.5Z" fill="#ccc"/></svg>
<svg style="left:813.1px;top:119px;" width="9" height="8" viewBox="0 0 9 8"><rect x="0.5" y="0.5" width="8" height="7" fill="#666" stroke="#ccc" stroke-width="0.7"/><path d="M1 7Q5 6 8 1" stroke="#fff" stroke-width="0.9" fill="none"/></svg>
<svg style="left:824.3000000000001px;top:119px;" width="9" height="8" viewBox="0 0 9 8"><rect x="0.5" y="0.5" width="8" height="7" fill="#777" stroke="#ccc" stroke-width="0.7"/><path d="M0.5 7.5L8.5 0.5V7.5Z" fill="#333"/></svg>
<svg style="left:835.5px;top:119px;" width="9" height="8" viewBox="0 0 9 8"><path d="M0.5 1H8.5L4.5 7.5Z" fill="none" stroke="#ddd" stroke-width="1"/></svg>
<svg style="left:785.8px;top:131.7px;" width="9" height="8" viewBox="0 0 9 8"><rect x="0.5" y="1" width="8" height="6" fill="#ccc"/><rect x="1.5" y="2" width="3" height="4" fill="#555"/></svg>
<svg style="left:796.8499999999999px;top:131.7px;" width="9" height="8" viewBox="0 0 9 8"><path d="M4.5 1V7.5M1 2.5H8M1 2.5L0 5.5H2.5ZM8 2.5L6.5 5.5H9Z" stroke="#ddd" stroke-width="0.7" fill="none"/></svg>
<svg style="left:807.9px;top:131.7px;" width="9" height="8" viewBox="0 0 9 8"><rect x="0.5" y="0.5" width="8" height="7" fill="#ddd"/><rect x="4.5" y="0.5" width="4" height="7" fill="#555"/></svg>
<svg style="left:818.9499999999999px;top:131.7px;" width="9" height="8" viewBox="0 0 9 8"><circle cx="3.2" cy="3" r="2.3" fill="#ccc"/><circle cx="6" cy="5" r="2.3" fill="#999" stroke="#ddd" stroke-width="0.5"/></svg>
<svg style="left:830.0px;top:131.7px;" width="9" height="8" viewBox="0 0 9 8"><circle cx="4.5" cy="2.8" r="2.2" fill="#ddd"/><circle cx="3" cy="5.2" r="2.2" fill="#eee"/><circle cx="6" cy="5.2" r="2.2" fill="#bbb"/></svg>
<svg style="left:841.05px;top:131.7px;" width="9" height="8" viewBox="0 0 9 8"><rect x="0.5" y="0.5" width="8" height="7" fill="#666" stroke="#ccc" stroke-width="0.7"/><path d="M4.5 0.5V7.5M0.5 4H8.5" stroke="#ccc" stroke-width="0.7"/></svg>
<svg style="left:791.4px;top:144.6px;" width="9" height="8" viewBox="0 0 9 8"><rect x="0.5" y="0.5" width="8" height="7" fill="#777" stroke="#ccc" stroke-width="0.7"/><path d="M2 6.5L7 1.5" stroke="#fff" stroke-width="1.4"/></svg>
<svg style="left:802.4px;top:144.6px;" width="9" height="8" viewBox="0 0 9 8"><rect x="0.5" y="0.5" width="8" height="7" fill="#888" stroke="#ccc" stroke-width="0.7"/><path d="M1 6.5L8 1.5" stroke="#333" stroke-width="1.2"/></svg>
<svg style="left:813.4px;top:144.6px;" width="9" height="8" viewBox="0 0 9 8"><rect x="0.5" y="0.5" width="8" height="7" fill="#ddd"/><path d="M0.5 5L8.5 2" stroke="#222" stroke-width="2"/></svg>
<svg style="left:824.4px;top:144.6px;" width="9" height="8" viewBox="0 0 9 8"><rect x="0.5" y="0.5" width="8" height="7" fill="#666" stroke="#ccc" stroke-width="0.7"/><path d="M2 1.5L4.5 4L7 1.5M2 6.5L4.5 4L7 6.5" stroke="#ddd" stroke-width="0.8" fill="none"/></svg>
<svg style="left:835.4px;top:144.6px;" width="9" height="8" viewBox="0 0 9 8"><rect x="0.5" y="0.5" width="8" height="7" fill="url(#gg)" stroke="#ccc" stroke-width="0.5"/><defs><linearGradient id="gg"><stop offset="0" stop-color="#fff"/><stop offset="1" stop-color="#222"/></linearGradient></defs></svg>
<div class="a" style="left:736px;top:157.3px;width:161.5px;height:2px;background:#3a3a3a;"></div>
<div class="a" style="left:736px;top:159px;width:161.5px;height:319px;background:#474747;"></div>
<div class="a" style="left:736px;top:159px;width:161.5px;height:8.3px;background:#424242;"></div>
<div class="a" style="left:736px;top:159.5px;width:18px;height:7.8px;background:#535353;"></div>
<div class="a" style="left:736px;top:167.3px;width:161.5px;height:57px;background:#535353;"></div>
<div class="t" style="left:738px;top:162px;font-size:5.4px;color:#f0f0f0;">Слои</div>
<div class="t" style="left:758.4px;top:162px;font-size:5.4px;color:#b8b8b8;">Каналы</div>
<div class="t" style="left:784.8px;top:162px;font-size:5.4px;color:#b8b8b8;">Контуры</div>
<svg style="left:891px;top:161px;" width="8" height="5" viewBox="0 0 8 5"><path d="M0.5 1.5L2 3L3.5 1.5Z" fill="#ccc"/><path d="M4.5 1h3M4.5 2.3h3M4.5 3.6h3" stroke="#bbb" stroke-width="0.6"/></svg>
<div class="a" style="left:738.5px;top:169.2px;width:41.5px;height:7.5px;background:#656565;border:0.5px solid #3e3e3e;border-radius:1px"></div>
<svg style="left:740px;top:170px;" width="6" height="6" viewBox="0 0 6 6"><circle cx="3.5" cy="2.5" r="1.6" stroke="#ddd" stroke-width="0.6" fill="none"/><path d="M2.3 3.7L0.8 5.2" stroke="#ddd" stroke-width="0.7"/></svg>
<div class="t" style="left:747px;top:172px;font-size:5.4px;color:#eee;">Вид</div>
<svg style="left:776px;top:170px;" width="4" height="6" viewBox="0 0 4 6"><path d="M0.5 2.5L2 1L3.5 2.5ZM0.5 3.5L2 5L3.5 3.5Z" fill="#ddd"/></svg>
<svg style="left:809.0px;top:169.3px;" width="8" height="8" viewBox="0 0 8 8"><rect x="0.5" y="1" width="7" height="5.5" fill="none" stroke="#ccc" stroke-width="0.7"/><path d="M1 6L3 3.5L5 5L7 3V6Z" fill="#ccc"/></svg>
<svg style="left:820.6px;top:169.3px;" width="8" height="8" viewBox="0 0 8 8"><circle cx="4" cy="4" r="3.2" fill="#ccc"/><path d="M4 0.8A3.2 3.2 0 0 1 4 7.2Z" fill="#555"/></svg>
<svg style="left:832.2px;top:169.3px;" width="8" height="8" viewBox="0 0 8 8"><path d="M0.8 1H7.2V2.6M4 1V7.2M2.7 7.2H5.3" stroke="#ddd" stroke-width="1" fill="none"/></svg>
<svg style="left:843.8px;top:169.3px;" width="8" height="8" viewBox="0 0 8 8"><path d="M1 1h1.5M5.5 1H7M1 7h1.5M5.5 7H7M1 1v1.5M7 1v1.5M1 7V5.5M7 7V5.5" stroke="#ddd" stroke-width="0.8"/></svg>
<svg style="left:855.4px;top:169.3px;" width="8" height="8" viewBox="0 0 8 8"><rect x="1" y="3.5" width="5" height="4" fill="#ccc"/><path d="M2 3.5V2A1.8 1.8 0 0 1 5.5 2" stroke="#ccc" stroke-width="0.8" fill="none"/></svg>
<div class="a" style="left:893.5px;top:169px;width:3px;height:8px;background:#3a3a3a;border-radius:1px"></div>
<div class="a" style="left:893.7px;top:169.3px;width:2.6px;height:2.6px;background:#ccc;border-radius:50%"></div>
<div class="a" style="left:738.5px;top:181.5px;width:84.1px;height:9.5px;background:#626262;border:0.5px solid #3c3c3c;border-radius:1px"></div>
<div class="t" style="left:741.5px;top:185px;font-size:5.4px;color:#eee;">Обычные</div>
<svg style="left:818px;top:183px;" width="4" height="6" viewBox="0 0 4 6"><path d="M0.5 2.5L2 1L3.5 2.5ZM0.5 3.5L2 5L3.5 3.5Z" fill="#ddd"/></svg>
<div class="t" style="left:825.5px;top:185px;font-size:5.4px;color:#e8e8e8;">Непрозрачность:</div>
<div class="a" style="left:869.9px;top:181.5px;width:19px;height:9.5px;background:#3e3e3e;border:0.5px solid #333"></div>
<div class="t" style="left:871.5px;top:185px;font-size:5.4px;color:#f2f2f2;">100%</div>
<div class="a" style="left:889px;top:181.5px;width:8.3px;height:9.5px;background:#626262;border:0.5px solid #3c3c3c"></div>
<svg style="left:891px;top:185px;" width="4" height="3" viewBox="0 0 4 3"><path d="M0.3 0.5H3.7L2 2.5Z" fill="#ddd"/></svg>
<div class="t" style="left:738px;top:198px;font-size:5.4px;color:#e0e0e0;">Закрепить:</div>
<svg style="left:768px;top:195.5px;" width="8" height="8" viewBox="0 0 8 8"><rect x="1" y="1" width="6" height="6" fill="none" stroke="#ccc" stroke-width="0.8"/><path d="M2.5 2.5h1M4.5 4.5h1M2.5 4.5h1M4.5 2.5h1" stroke="#ccc" stroke-width="0.8"/></svg>
<svg style="left:779px;top:195.5px;" width="8" height="8" viewBox="0 0 8 8"><path d="M7.5 0.5L3 5" stroke="#ddd" stroke-width="0.9"/><path d="M3 4.5L0.5 7.5L3.5 6Z" fill="#ddd"/></svg>
<svg style="left:789px;top:195.5px;" width="8" height="8" viewBox="0 0 8 8"><path d="M4 0.5V7.5M0.5 4H7.5" stroke="#ccc" stroke-width="0.7"/><path d="M4 0.3L3 1.5H5ZM4 7.7L3 6.5H5ZM0.3 4L1.5 3V5ZM7.7 4L6.5 3V5Z" fill="#ccc"/></svg>
<svg style="left:800px;top:195.5px;" width="8" height="8" viewBox="0 0 8 8"><rect x="1.5" y="3.5" width="5" height="4" fill="#ccc"/><path d="M2.5 3.5V2.3A1.5 1.5 0 0 1 5.5 2.3V3.5" stroke="#ccc" stroke-width="0.8" fill="none"/></svg>
<div class="t" style="left:845.3px;top:198px;font-size:5.4px;color:#e0e0e0;">Заливка:</div>
<div class="a" style="left:869.9px;top:195px;width:19px;height:9.5px;background:#3e3e3e;border:0.5px solid #333"></div>
<div class="t" style="left:871.5px;top:198px;font-size:5.4px;color:#f2f2f2;">100%</div>
<div class="a" style="left:889px;top:195px;width:8.3px;height:9.5px;background:#626262;border:0.5px solid #3c3c3c"></div>
<svg style="left:891px;top:198.5px;" width="4" height="3" viewBox="0 0 4 3"><path d="M0.3 0.5H3.7L2 2.5Z" fill="#ddd"/></svg>
<div class="a" style="left:736px;top:206.3px;width:161.5px;height:0.8px;background:#3a3a3a;"></div>
<div class="a" style="left:749px;top:207px;width:143.6px;height:18.3px;background:#5a6b80;"></div>
<div class="a" style="left:736px;top:207px;width:13px;height:18.3px;background:#535353;"></div>
<div class="a" style="left:736px;top:225.3px;width:156.6px;height:15px;background:#535353;border-top:0.6px solid #3a3a3a;border-bottom:0.6px solid #3a3a3a"></div>
<svg style="left:739.5px;top:213.9px;" width="6" height="5" viewBox="0 0 6 5"><path d="M0.3 2.5Q3 -0.5 5.7 2.5Q3 5.5 0.3 2.5Z" fill="none" stroke="#ddd" stroke-width="0.6"/><circle cx="3" cy="2.5" r="1" fill="#ddd"/></svg>
<svg style="left:739.5px;top:230.5px;" width="6" height="5" viewBox="0 0 6 5"><path d="M0.3 2.5Q3 -0.5 5.7 2.5Q3 5.5 0.3 2.5Z" fill="none" stroke="#ddd" stroke-width="0.6"/><circle cx="3" cy="2.5" r="1" fill="#ddd"/></svg>
<div class="a" style="left:748.5px;top:207px;width:0.6px;height:33.3px;background:#3a3a3a;"></div>
<svg style="left:750.4px;top:208px;" width="12.6" height="16" viewBox="0 0 12.6 16"><rect width="12.6" height="16" filter="url(#tex)"/><rect width="12.6" height="3" fill="#9a9a60" opacity="0.5"/><rect x="0.35" y="0.35" width="11.9" height="15.3" fill="none" stroke="#d8d8d8" stroke-width="0.7"/></svg>
<div class="a" style="left:768.8px;top:208.9px;width:11.2px;height:14.1px;background:#ffffff;border:0.6px solid #9aa4b0"></div>
<div class="t" style="left:784.8px;top:215px;font-size:5.5px;color:#eef3fa;">Слой 1</div>
<div class="a" style="left:750.4px;top:227px;width:12.6px;height:12.6px;background:radial-gradient(circle at 35% 65%,#4b3020 0,#7b5a3a 30%,#c8a070 55%,#a07a48)"></div>
<div class="t" style="left:766.9px;top:232px;font-size:5.5px;color:#e8e8e8;font-style:italic">Фон</div>
<svg style="left:879.5px;top:229.5px;" width="6" height="7" viewBox="0 0 6 7"><path d="M3 0.5L5.5 6H0.5Z" fill="none" stroke="#ccc" stroke-width="0.8"/><rect x="2.2" y="3.5" width="1.6" height="1.6" fill="#ccc"/></svg>
<div class="a" style="left:892.6px;top:206.5px;width:4.7px;height:263px;background:#424242;"></div>
<div class="a" style="left:897.3px;top:29px;width:2.7px;height:449px;background:#3a3a3a;"></div>
<div class="a" style="left:736px;top:469px;width:161.5px;height:9px;background:#535353;border-top:0.6px solid #3a3a3a"></div>
<svg style="left:803.5px;top:470px;" width="8" height="6" viewBox="0 0 8 6"><path d="M3 1.5H2A1.5 1.5 0 0 0 2 4.5H3M5 1.5H6A1.5 1.5 0 0 1 6 4.5H5M2.5 3H5.5" stroke="#999" stroke-width="0.7" fill="none"/></svg>
<div class="t" style="left:816.5px;top:469.8px;font-size:6.5px;font-style:italic;font-family:'Liberation Serif';color:#eee">fx</div>
<svg style="left:828.5px;top:470.5px;" width="8" height="6" viewBox="0 0 8 6"><rect x="0.5" y="0.5" width="7" height="5" fill="#ddd"/><circle cx="4" cy="3" r="1.5" fill="#535353"/></svg>
<svg style="left:841px;top:470.3px;" width="8" height="6.5" viewBox="0 0 8 6.5"><circle cx="3.3" cy="3.2" r="2.8" fill="#ddd"/><path d="M3.3 0.4A2.8 2.8 0 0 0 3.3 6Z" fill="#666"/></svg>
<svg style="left:854px;top:470.5px;" width="8" height="6" viewBox="0 0 8 6"><path d="M0.5 1H3L3.8 2H7.5V5.5H0.5Z" fill="#ddd"/></svg>
<svg style="left:866px;top:470.3px;" width="8" height="6.5" viewBox="0 0 8 6.5"><rect x="1" y="1" width="6" height="5" fill="#ddd"/><path d="M1 1h3v2.5h3" stroke="#535353" stroke-width="0.6" fill="none"/></svg>
<svg style="left:879px;top:470px;" width="8" height="7" viewBox="0 0 8 7"><rect x="1.5" y="2" width="5" height="4.5" fill="#ddd"/><rect x="0.8" y="1" width="6.4" height="0.8" fill="#ddd"/><rect x="3" y="0.2" width="2" height="0.8" fill="#ddd"/></svg>
</body></html>
